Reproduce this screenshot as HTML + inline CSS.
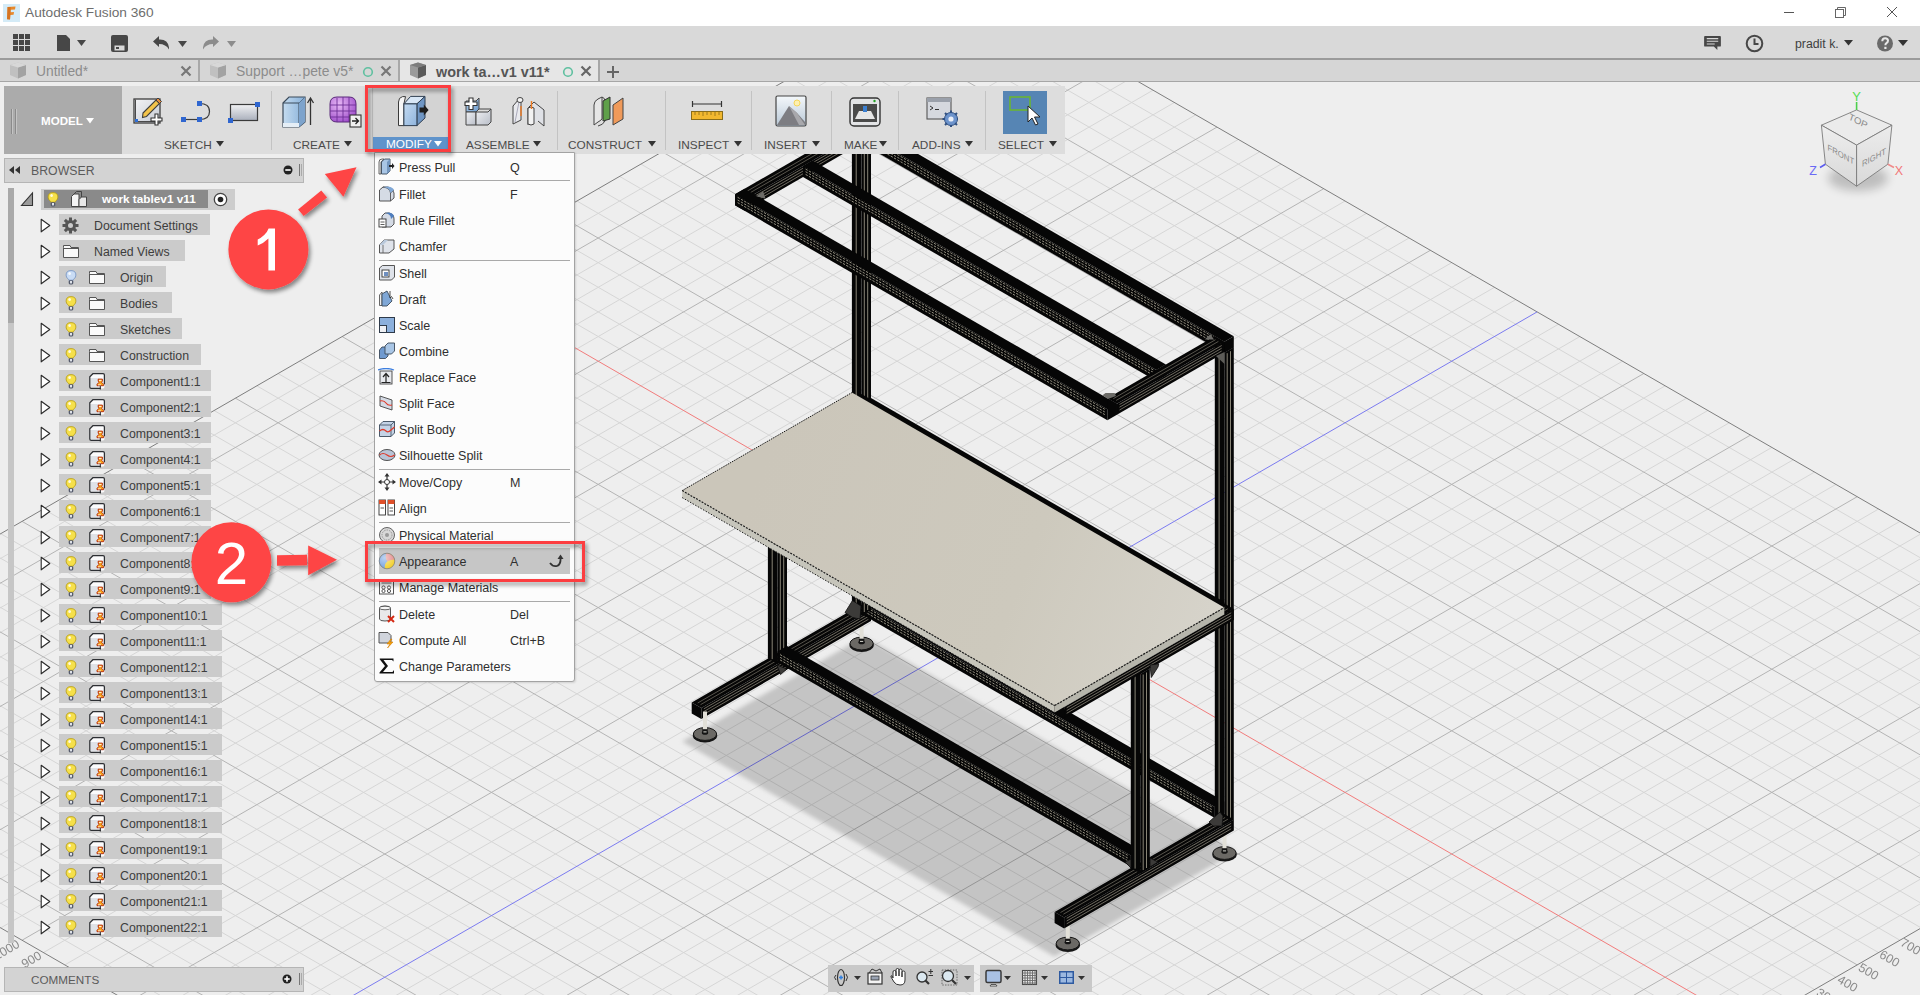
<!DOCTYPE html>
<html><head><meta charset="utf-8">
<style>
*{box-sizing:border-box}
html,body{margin:0;padding:0}
body{width:1920px;height:995px;overflow:hidden;position:relative;background:#eeeeee;font-family:"Liberation Sans",sans-serif;color:#3c3c3c}
.a{position:absolute}
.t{position:absolute;white-space:nowrap;line-height:1}
#title{left:0;top:0;width:1920px;height:26px;background:#fff}
#tool{left:0;top:26px;width:1920px;height:32px;background:#d9d9d9}
#tabs{left:0;top:58px;width:1920px;height:24px;background:#d6d6d6;border-top:2px solid #9b9b9b;border-bottom:1px solid #a6a6a6}
.tab{position:absolute;top:0;height:21px;border-right:2px solid #a8a8a8}
#ribbon{left:4px;top:86px;width:1061px;height:68px;background:#dddddd}
.rl{position:absolute;top:139px;font-size:11.8px;color:#4b4b4b;white-space:nowrap;line-height:12px}
.sep{position:absolute;top:91px;width:1px;height:59px;background:#c3c3c3}
.row{position:absolute;height:21px;background:#cbcbcb}
.rt{position:absolute;font-size:12.3px;color:#3d3d3d;white-space:nowrap;line-height:14px}
.mi{position:absolute;left:399px;font-size:12.5px;color:#2f2f2f;white-space:nowrap;line-height:14px}
.ms{position:absolute;left:510px;font-size:12.5px;color:#2f2f2f;white-space:nowrap;line-height:14px}
.msep{position:absolute;left:379px;width:191px;height:1px;background:#a9a9a9}
</style></head><body>
<!-- ============ VIEWPORT ============ -->
<svg class="a" style="left:0;top:0" width="1920" height="995" viewBox="0 0 1920 995">
<defs><clipPath id="vpclip"><rect x="0" y="82" width="1920" height="913"/></clipPath></defs>
<g clip-path="url(#vpclip)">
<rect x="0" y="82" width="1920" height="913" fill="#eeeeee"/>
<path d="M939.6 -8.4L2241.3 743.1M918.3 3.9L2220.0 755.4M897.0 16.2L2198.6 767.8M854.3 40.9L2156.0 792.4M833.0 53.2L2134.6 804.7M811.6 65.5L2113.3 817.0M790.3 77.8L2091.9 829.4M747.6 102.5L2049.3 854.0M726.3 114.8L2027.9 866.3M704.9 127.1L2006.6 878.6M683.6 139.4L1985.2 891.0M640.9 164.1L1942.6 915.6M619.6 176.4L1921.2 927.9M598.2 188.7L1899.9 940.2M576.9 201.0L1878.6 952.6M534.2 225.7L1835.9 977.2M512.9 238.0L1814.5 989.5M491.5 250.3L1793.2 1001.8M470.2 262.6L1771.9 1014.2M427.5 287.3L1729.2 1038.8M406.2 299.6L1707.8 1051.1M384.8 311.9L1686.5 1063.4M363.5 324.2L1665.2 1075.8M320.8 348.9L1622.5 1100.4M299.5 361.2L1601.1 1112.7M278.1 373.5L1579.8 1125.0M256.8 385.8L1558.5 1137.4M214.1 410.5L1515.8 1162.0M192.8 422.8L1494.5 1174.3M171.4 435.1L1473.1 1186.6M150.1 447.4L1451.8 1199.0M107.4 472.1L1409.1 1223.6M86.1 484.4L1387.8 1235.9M64.8 496.7L1366.4 1248.2M43.4 509.0L1345.1 1260.6M0.7 533.7L1302.4 1285.2M-20.6 546.0L1281.1 1297.5M-41.9 558.3L1259.7 1309.8M-63.3 570.6L1238.4 1322.2M-106.0 595.3L1195.7 1346.8M-127.3 607.6L1174.4 1359.1M-148.6 619.9L1153.0 1371.4M-170.0 632.2L1131.7 1383.8M-212.7 656.9L1089.0 1408.4M-234.0 669.2L1067.7 1420.7M-255.3 681.5L1046.3 1433.0M-276.7 693.8L1025.0 1445.4M-319.3 718.5L982.3 1470.0M-319.3 743.1L982.3 -8.4M-276.7 767.8L1025.0 16.2M-255.3 780.1L1046.3 28.6M-234.0 792.4L1067.7 40.9M-212.7 804.7L1089.0 53.2M-170.0 829.4L1131.7 77.8M-148.6 841.7L1153.0 90.2M-127.3 854.0L1174.4 102.5M-106.0 866.3L1195.7 114.8M-63.3 891.0L1238.4 139.4M-41.9 903.3L1259.7 151.8M-20.6 915.6L1281.1 164.1M0.7 927.9L1302.4 176.4M43.4 952.6L1345.1 201.0M64.8 964.9L1366.4 213.4M86.1 977.2L1387.8 225.7M107.4 989.5L1409.1 238.0M150.1 1014.2L1451.8 262.6M171.4 1026.5L1473.1 275.0M192.8 1038.8L1494.5 287.3M214.1 1051.1L1515.8 299.6M256.8 1075.8L1558.5 324.2M278.1 1088.1L1579.8 336.6M299.5 1100.4L1601.1 348.9M320.8 1112.7L1622.5 361.2M363.5 1137.4L1665.2 385.8M384.8 1149.7L1686.5 398.2M406.2 1162.0L1707.8 410.5M427.5 1174.3L1729.2 422.8M470.2 1199.0L1771.9 447.4M491.5 1211.3L1793.2 459.8M512.9 1223.6L1814.5 472.1M534.2 1235.9L1835.9 484.4M576.9 1260.6L1878.6 509.0M598.2 1272.9L1899.9 521.4M619.6 1285.2L1921.2 533.7M640.9 1297.5L1942.6 546.0M683.6 1322.2L1985.2 570.6M704.9 1334.5L2006.6 583.0M726.3 1346.8L2027.9 595.3M747.6 1359.1L2049.3 607.6M790.3 1383.8L2091.9 632.2M811.6 1396.1L2113.3 644.6M833.0 1408.4L2134.6 656.9M854.3 1420.7L2156.0 669.2M897.0 1445.4L2198.6 693.8M918.3 1457.7L2220.0 706.2M939.6 1470.0L2241.3 718.5" stroke="#d6d6d6" stroke-width="1" fill="none"/>
<path d="M875.6 28.6L2177.3 780.1M768.9 90.2L2070.6 841.7M662.2 151.8L1963.9 903.3M555.5 213.4L1857.2 964.9M342.2 336.6L1643.8 1088.1M235.5 398.2L1537.1 1149.7M128.8 459.8L1430.4 1211.3M22.1 521.4L1323.7 1272.9M-84.6 583.0L1217.0 1334.5M-191.3 644.6L1110.4 1396.1M-298.0 706.2L1003.7 1457.7M-298.0 755.4L1003.7 3.9M-191.3 817.0L1110.4 65.5M-84.6 878.6L1217.0 127.1M22.1 940.2L1323.7 188.7M128.8 1001.8L1430.4 250.3M342.2 1125.0L1643.8 373.5M448.9 1186.6L1750.5 435.1M555.5 1248.2L1857.2 496.7M662.2 1309.8L1963.9 558.3M768.9 1371.4L2070.6 619.9M875.6 1433.0L2177.3 681.5" stroke="#b4b4b4" stroke-width="1" fill="none"/>
<path d="M961.0 -20.7L2262.7 730.8M-340.7 730.8L961.0 1482.3M-340.7 730.8L961.0 -20.7M961.0 1482.3L2262.7 730.8" stroke="#7e7e7e" stroke-width="1" fill="none"/>
<path d="M448.9 275.0L1750.5 1026.5" stroke="#f27c7c" stroke-width="1" fill="none"/>
<path d="M235.5 1063.4L1537.1 311.9" stroke="#7b7bf0" stroke-width="1" fill="none"/>
<text x="1899.5" y="945.0" transform="rotate(30 1899.5 945.0)" font-size="12.5" fill="#8a8a8a" font-family="Liberation Sans, sans-serif">700</text>
<text x="1878.5" y="957.0" transform="rotate(30 1878.5 957.0)" font-size="12.5" fill="#8a8a8a" font-family="Liberation Sans, sans-serif">600</text>
<text x="1857.5" y="970.0" transform="rotate(30 1857.5 970.0)" font-size="12.5" fill="#8a8a8a" font-family="Liberation Sans, sans-serif">500</text>
<text x="1836.5" y="982.0" transform="rotate(30 1836.5 982.0)" font-size="12.5" fill="#8a8a8a" font-family="Liberation Sans, sans-serif">400</text>
<text x="1815.5" y="995.0" transform="rotate(30 1815.5 995.0)" font-size="12.5" fill="#8a8a8a" font-family="Liberation Sans, sans-serif">300</text>
<text x="-3.5" y="960.5" transform="rotate(-30 -3.5 960.5)" font-size="12.5" fill="#8a8a8a" font-family="Liberation Sans, sans-serif">1000</text>
<text x="24.5" y="968.5" transform="rotate(-30 24.5 968.5)" font-size="12.5" fill="#8a8a8a" font-family="Liberation Sans, sans-serif">900</text>
<filter id="blur" x="-20%" y="-20%" width="140%" height="140%"><feGaussianBlur stdDeviation="2.2"/></filter>
<polygon points="682.2,741.6 864.1,636.6 1236.4,851.6 1054.6,956.6" fill="#d2d2d2" filter="url(#blur)" style="mix-blend-mode:multiply"/>
<linearGradient id="ttg" gradientUnits="userSpaceOnUse" x1="760" y1="470" x2="1200" y2="640"><stop offset="0" stop-color="#cbc6ba"/><stop offset=".6" stop-color="#cdc9bd"/><stop offset="1" stop-color="#d6d3ca"/></linearGradient>
<ellipse cx="861.6" cy="645.1" rx="12.2" ry="7" fill="#151515"/><ellipse cx="861.6" cy="643.5" rx="11.6" ry="6.4" fill="#6b6965" stroke="#161616" stroke-width="1"/><rect x="859.6" y="621.0" width="4" height="19.5" fill="#e2e0d8"/><ellipse cx="861.6" cy="642.3" rx="3.2" ry="2" fill="#141414"/><rect x="858.9" y="638.7" width="5.4" height="3.6" fill="#141414"/><rect x="860.0" y="640.9" width="3.2" height="1" fill="#d8d8d0"/><ellipse cx="1224.5" cy="854.6" rx="12.2" ry="7" fill="#151515"/><ellipse cx="1224.5" cy="853.0" rx="11.6" ry="6.4" fill="#6b6965" stroke="#161616" stroke-width="1"/><rect x="1222.5" y="830.5" width="4" height="19.5" fill="#e2e0d8"/><ellipse cx="1224.5" cy="851.8" rx="3.2" ry="2" fill="#141414"/><rect x="1221.8" y="848.2" width="5.4" height="3.6" fill="#141414"/><rect x="1222.9" y="850.4" width="3.2" height="1" fill="#d8d8d0"/><polygon points="861.5,604.6 871.0,610.1 701.3,708.1 691.7,702.6" fill="#060606" /><polygon points="691.7,713.6 701.3,719.1 701.3,708.1 691.7,702.6" fill="#060606" /><polygon points="871.0,621.1 701.3,719.1 701.3,708.1 871.0,610.1" fill="#060606" /><line x1="868.4" y1="619.3" x2="703.9" y2="714.3" stroke="#c2bca8" stroke-width="0.55"/><line x1="868.4" y1="616.5" x2="703.9" y2="711.5" stroke="#c2bca8" stroke-width="0.55"/><line x1="868.4" y1="613.8" x2="703.9" y2="708.8" stroke="#c2bca8" stroke-width="0.55"/><line x1="862.2" y1="608.0" x2="697.7" y2="703.0" stroke="#a8a292" stroke-width="0.5"/><line x1="865.1" y1="609.7" x2="700.5" y2="704.7" stroke="#a8a292" stroke-width="0.5"/><polygon points="871.0,597.6 1224.3,801.6 1214.8,807.1 861.5,603.1" fill="#060606" /><polygon points="861.5,614.1 1214.8,818.1 1214.8,807.1 861.5,603.1" fill="#060606" /><polygon points="1224.3,812.6 1214.8,818.1 1214.8,807.1 1224.3,801.6" fill="#060606" /><line x1="864.1" y1="611.4" x2="1212.2" y2="812.4" stroke="#c2bca8" stroke-width="0.75" stroke-dasharray="2.4 1.4"/><line x1="864.1" y1="608.8" x2="1212.2" y2="809.8" stroke="#c2bca8" stroke-width="0.75" stroke-dasharray="2.4 1.4"/><line x1="864.1" y1="606.1" x2="1212.2" y2="807.1" stroke="#c2bca8" stroke-width="0.75" stroke-dasharray="2.4 1.4"/><polygon points="861.5,121.3 871.0,126.8 861.5,132.3 851.9,126.8" fill="#060606" /><polygon points="851.9,610.1 861.5,615.6 861.5,132.3 851.9,126.8" fill="#060606" /><polygon points="871.0,610.1 861.5,615.6 861.5,132.3 871.0,126.8" fill="#060606" /><line x1="856.2" y1="610.6" x2="856.2" y2="131.3" stroke="#c2bca8" stroke-width="0.7"/><line x1="864.3" y1="612.0" x2="864.3" y2="132.7" stroke="#c2bca8" stroke-width="0.7"/><line x1="867.7" y1="610.0" x2="867.7" y2="130.7" stroke="#c2bca8" stroke-width="0.7"/><polygon points="777.5,453.6 787.0,459.1 777.5,464.6 767.9,459.1" fill="#060606" /><polygon points="767.9,658.6 777.5,664.1 777.5,464.6 767.9,459.1" fill="#060606" /><polygon points="787.0,658.6 777.5,664.1 777.5,464.6 787.0,459.1" fill="#060606" /><line x1="772.2" y1="659.1" x2="772.2" y2="463.6" stroke="#c2bca8" stroke-width="0.7"/><line x1="780.3" y1="660.5" x2="780.3" y2="465.0" stroke="#c2bca8" stroke-width="0.7"/><line x1="783.7" y1="658.5" x2="783.7" y2="463.0" stroke="#c2bca8" stroke-width="0.7"/><polygon points="787.0,646.1 1140.3,850.1 1130.8,855.6 777.5,651.6" fill="#060606" /><polygon points="777.5,662.6 1130.8,866.6 1130.8,855.6 777.5,651.6" fill="#060606" /><polygon points="1140.3,861.1 1130.8,866.6 1130.8,855.6 1140.3,850.1" fill="#060606" /><line x1="780.1" y1="659.9" x2="1128.2" y2="860.9" stroke="#c2bca8" stroke-width="0.75" stroke-dasharray="2.4 1.4"/><line x1="780.1" y1="657.3" x2="1128.2" y2="858.3" stroke="#c2bca8" stroke-width="0.75" stroke-dasharray="2.4 1.4"/><line x1="780.1" y1="654.6" x2="1128.2" y2="855.6" stroke="#c2bca8" stroke-width="0.75" stroke-dasharray="2.4 1.4"/><polygon points="1224.3,341.8 1233.8,347.3 1224.3,352.8 1214.8,347.3" fill="#060606" /><polygon points="1214.8,819.6 1224.3,825.1 1224.3,352.8 1214.8,347.3" fill="#060606" /><polygon points="1233.8,819.6 1224.3,825.1 1224.3,352.8 1233.8,347.3" fill="#060606" /><line x1="1219.1" y1="820.1" x2="1219.1" y2="351.8" stroke="#c2bca8" stroke-width="0.7"/><line x1="1227.2" y1="821.5" x2="1227.2" y2="353.2" stroke="#c2bca8" stroke-width="0.7"/><line x1="1230.5" y1="819.5" x2="1230.5" y2="351.2" stroke="#c2bca8" stroke-width="0.7"/><ellipse cx="705.0" cy="735.6" rx="12.2" ry="7" fill="#151515"/><ellipse cx="705.0" cy="734.0" rx="11.6" ry="6.4" fill="#6b6965" stroke="#161616" stroke-width="1"/><rect x="703.0" y="711.5" width="4" height="19.5" fill="#e2e0d8"/><ellipse cx="705.0" cy="732.8" rx="3.2" ry="2" fill="#141414"/><rect x="702.3" y="729.2" width="5.4" height="3.6" fill="#141414"/><rect x="703.4" y="731.4" width="3.2" height="1" fill="#d8d8d0"/><ellipse cx="1067.8" cy="945.1" rx="12.2" ry="7" fill="#151515"/><ellipse cx="1067.8" cy="943.5" rx="11.6" ry="6.4" fill="#6b6965" stroke="#161616" stroke-width="1"/><rect x="1065.8" y="921.0" width="4" height="19.5" fill="#e2e0d8"/><ellipse cx="1067.8" cy="942.2" rx="3.2" ry="2" fill="#141414"/><rect x="1065.1" y="938.7" width="5.4" height="3.6" fill="#141414"/><rect x="1066.2" y="940.9" width="3.2" height="1" fill="#d8d8d0"/><polygon points="1224.3,814.1 1233.8,819.6 1064.1,917.6 1054.6,912.1" fill="#060606" /><polygon points="1054.6,923.1 1064.1,928.6 1064.1,917.6 1054.6,912.1" fill="#060606" /><polygon points="1233.8,830.6 1064.1,928.6 1064.1,917.6 1233.8,819.6" fill="#060606" /><line x1="1231.2" y1="828.8" x2="1066.7" y2="923.8" stroke="#c2bca8" stroke-width="0.55"/><line x1="1231.2" y1="826.0" x2="1066.7" y2="921.0" stroke="#c2bca8" stroke-width="0.55"/><line x1="1231.2" y1="823.3" x2="1066.7" y2="918.3" stroke="#c2bca8" stroke-width="0.55"/><line x1="1225.1" y1="817.5" x2="1060.5" y2="912.5" stroke="#a8a292" stroke-width="0.5"/><line x1="1227.9" y1="819.2" x2="1063.4" y2="914.2" stroke="#a8a292" stroke-width="0.5"/><polygon points="1140.3,663.1 1149.8,668.6 1140.3,674.1 1130.8,668.6" fill="#060606" /><polygon points="1130.8,868.1 1140.3,873.6 1140.3,674.1 1130.8,668.6" fill="#060606" /><polygon points="1149.8,868.1 1140.3,873.6 1140.3,674.1 1149.8,668.6" fill="#060606" /><line x1="1135.1" y1="868.6" x2="1135.1" y2="673.1" stroke="#c2bca8" stroke-width="0.7"/><line x1="1143.2" y1="870.0" x2="1143.2" y2="674.5" stroke="#c2bca8" stroke-width="0.7"/><line x1="1146.5" y1="868.0" x2="1146.5" y2="672.5" stroke="#c2bca8" stroke-width="0.7"/><polygon points="861.5,394.1 871.0,399.6 709.0,493.1 699.5,487.6" fill="#060606" /><polygon points="699.5,498.6 709.0,504.1 709.0,493.1 699.5,487.6" fill="#060606" /><polygon points="871.0,410.6 709.0,504.1 709.0,493.1 871.0,399.6" fill="#060606" /><polygon points="871.0,399.6 1224.3,603.6 1214.8,609.1 861.5,405.1" fill="#060606" /><polygon points="861.5,416.1 1214.8,620.1 1214.8,609.1 861.5,405.1" fill="#060606" /><polygon points="1224.3,614.6 1214.8,620.1 1214.8,609.1 1224.3,603.6" fill="#060606" /><polygon points="1224.3,603.6 1233.8,609.1 1064.1,707.1 1054.6,701.6" fill="#060606" /><polygon points="1054.6,712.6 1064.1,718.1 1064.1,707.1 1054.6,701.6" fill="#060606" /><polygon points="1233.8,620.1 1064.1,718.1 1064.1,707.1 1233.8,609.1" fill="#060606" /><line x1="1231.2" y1="618.3" x2="1066.7" y2="713.3" stroke="#c2bca8" stroke-width="0.55"/><line x1="1231.2" y1="615.6" x2="1066.7" y2="710.6" stroke="#c2bca8" stroke-width="0.55"/><line x1="1231.2" y1="612.8" x2="1066.7" y2="707.8" stroke="#c2bca8" stroke-width="0.55"/><line x1="1225.1" y1="607.0" x2="1060.5" y2="702.0" stroke="#a8a292" stroke-width="0.5"/><line x1="1227.9" y1="608.7" x2="1063.4" y2="703.7" stroke="#a8a292" stroke-width="0.5"/><polygon points="871.0,398.1 1224.3,602.1 1214.8,607.6 861.5,403.6" fill="#060606" /><polygon points="861.5,414.6 1214.8,618.6 1214.8,607.6 861.5,403.6" fill="#060606" /><polygon points="1224.3,613.1 1214.8,618.6 1214.8,607.6 1224.3,602.1" fill="#060606" /><line x1="864.1" y1="411.9" x2="1212.2" y2="612.9" stroke="#c2bca8" stroke-width="0.75" stroke-dasharray="2.4 1.4"/><line x1="864.1" y1="409.3" x2="1212.2" y2="610.3" stroke="#c2bca8" stroke-width="0.75" stroke-dasharray="2.4 1.4"/><line x1="864.1" y1="406.6" x2="1212.2" y2="607.6" stroke="#c2bca8" stroke-width="0.75" stroke-dasharray="2.4 1.4"/><polygon points="851.9,392.6 1224.3,607.6 1054.6,705.6 682.2,490.6" fill="url(#ttg)" /><polygon points="682.2,497.6 1054.6,712.6 1054.6,705.6 682.2,490.6" fill="#c6c5bb" /><polygon points="1224.3,614.6 1054.6,712.6 1054.6,705.6 1224.3,607.6" fill="#b7b6ac" /><line x1="682.2" y1="490.6" x2="1054.6" y2="705.6" stroke="#1a1a1a" stroke-width="1.2" stroke-dasharray="2 1.2"/><line x1="682.2" y1="497.6" x2="1054.6" y2="712.6" stroke="#1a1a1a" stroke-width="1" stroke-dasharray="1.5 1.5"/><line x1="1054.6" y1="705.6" x2="1224.3" y2="607.6" stroke="#1a1a1a" stroke-width="1.2" stroke-dasharray="2 1.2"/><line x1="682.2" y1="490.6" x2="851.9" y2="392.6" stroke="#1a1a1a" stroke-width="1" stroke-dasharray="1.5 1"/><polygon points="861.5,121.3 1233.8,336.3 1224.3,341.8 851.9,126.8" fill="#060606" /><polygon points="851.9,137.8 1224.3,352.8 1224.3,341.8 851.9,126.8" fill="#060606" /><polygon points="1233.8,347.3 1224.3,352.8 1224.3,341.8 1233.8,336.3" fill="#060606" /><line x1="854.5" y1="135.1" x2="1221.7" y2="347.1" stroke="#c2bca8" stroke-width="0.75" stroke-dasharray="2.4 1.4"/><line x1="854.5" y1="132.5" x2="1221.7" y2="344.5" stroke="#c2bca8" stroke-width="0.75" stroke-dasharray="2.4 1.4"/><line x1="854.5" y1="129.8" x2="1221.7" y2="341.8" stroke="#c2bca8" stroke-width="0.75" stroke-dasharray="2.4 1.4"/><polygon points="851.9,126.8 861.5,132.3 744.6,199.8 735.0,194.3" fill="#060606" /><polygon points="735.0,205.3 744.6,210.8 744.6,199.8 735.0,194.3" fill="#060606" /><polygon points="861.5,143.3 744.6,210.8 744.6,199.8 861.5,132.3" fill="#060606" /><line x1="858.9" y1="141.5" x2="747.2" y2="206.0" stroke="#c2bca8" stroke-width="0.55"/><line x1="858.9" y1="138.8" x2="747.2" y2="203.2" stroke="#c2bca8" stroke-width="0.55"/><line x1="858.9" y1="136.0" x2="747.2" y2="200.5" stroke="#c2bca8" stroke-width="0.55"/><line x1="852.7" y1="130.2" x2="741.0" y2="194.7" stroke="#a8a292" stroke-width="0.5"/><line x1="855.5" y1="131.9" x2="743.8" y2="196.4" stroke="#a8a292" stroke-width="0.5"/><polygon points="812.5,160.6 1165.9,364.6 1156.3,370.1 803.0,166.1" fill="#060606" /><polygon points="803.0,177.1 1156.3,381.1 1156.3,370.1 803.0,166.1" fill="#060606" /><polygon points="1165.9,375.6 1156.3,381.1 1156.3,370.1 1165.9,364.6" fill="#060606" /><line x1="805.6" y1="174.4" x2="1153.7" y2="375.4" stroke="#c2bca8" stroke-width="0.75" stroke-dasharray="2.4 1.4"/><line x1="805.6" y1="171.7" x2="1153.7" y2="372.7" stroke="#c2bca8" stroke-width="0.75" stroke-dasharray="2.4 1.4"/><line x1="805.6" y1="169.1" x2="1153.7" y2="370.1" stroke="#c2bca8" stroke-width="0.75" stroke-dasharray="2.4 1.4"/><polygon points="744.6,188.8 1116.9,403.8 1107.4,409.3 735.0,194.3" fill="#060606" /><polygon points="735.0,205.3 1107.4,420.3 1107.4,409.3 735.0,194.3" fill="#060606" /><polygon points="1116.9,414.8 1107.4,420.3 1107.4,409.3 1116.9,403.8" fill="#060606" /><line x1="737.6" y1="202.6" x2="1104.8" y2="414.6" stroke="#c2bca8" stroke-width="0.75" stroke-dasharray="2.4 1.4"/><line x1="737.6" y1="200.0" x2="1104.8" y2="412.0" stroke="#c2bca8" stroke-width="0.75" stroke-dasharray="2.4 1.4"/><line x1="737.6" y1="197.3" x2="1104.8" y2="409.3" stroke="#c2bca8" stroke-width="0.75" stroke-dasharray="2.4 1.4"/><polygon points="1214.8,336.3 1224.3,341.8 1116.9,403.8 1107.4,398.3" fill="#060606" /><polygon points="1107.4,409.3 1116.9,414.8 1116.9,403.8 1107.4,398.3" fill="#060606" /><polygon points="1224.3,352.8 1116.9,414.8 1116.9,403.8 1224.3,341.8" fill="#060606" /><line x1="1221.7" y1="351.0" x2="1119.5" y2="410.0" stroke="#c2bca8" stroke-width="0.55"/><line x1="1221.7" y1="348.2" x2="1119.5" y2="407.2" stroke="#c2bca8" stroke-width="0.55"/><line x1="1221.7" y1="345.5" x2="1119.5" y2="404.5" stroke="#c2bca8" stroke-width="0.55"/><line x1="1215.5" y1="339.7" x2="1113.3" y2="398.7" stroke="#a8a292" stroke-width="0.5"/><line x1="1218.4" y1="341.4" x2="1116.2" y2="400.4" stroke="#a8a292" stroke-width="0.5"/><polygon points="756.3,196.3 763.1,191.3 765.6,198.8" fill="#6d6c68"/><polygon points="1205,339.5 1210.3,334.3 1214,339.5" fill="#6d6c68"/><polygon points="1216,356 1224.5,352 1224.5,364" fill="#5d5c58"/><polygon points="1102.5,395.3 1105.5,393 1114.6,393 1116,396 1107.8,399" fill="#6d6c68"/><polygon points="845,612.5 852.5,600.5 861,606 860,619 852.5,617.5" fill="#3c3b39" stroke="#0c0c0c" stroke-width=".8"/><polygon points="777,665 787,669 780.5,674.5" fill="#3c3b39" stroke="#0c0c0c" stroke-width=".8"/><polygon points="1209,822 1220,812 1223,816 1222,826 1213,826" fill="#3c3b39" stroke="#0c0c0c" stroke-width=".8"/><polygon points="1150,665 1158.8,663.8 1158,667 1151.3,677.5" fill="#3c3b39" stroke="#0c0c0c" stroke-width=".8"/><polygon points="1125,862 1131,859 1131,868" fill="#3c3b39" stroke="#0c0c0c" stroke-width=".8"/><polygon points="1150,858 1158,862 1150,867" fill="#3c3b39" stroke="#0c0c0c" stroke-width=".8"/>
</g>
</svg>

<!-- ============ TITLE BAR ============ -->
<div id="title" class="a">
  <svg class="a" style="left:3px;top:4px" width="17" height="18" viewBox="0 0 17 18">
    <rect x="0" y="0" width="17" height="18" fill="#d4ebf7"/>
    <path d="M4.5 3 L12.5 2.5 L12 5.5 L7.8 5.8 L7.6 8.2 L11 8 L10.6 10.8 L7.4 11 L7 15.5 L4 15.2 Z" fill="#e8892b"/>
    <path d="M4.5 3 L7.8 3 L7 15.5 L4 15.2 Z" fill="#c9661a" opacity=".6"/>
  </svg>
  <div class="t" style="left:25px;top:6px;font-size:13.7px;color:#6e6e6e">Autodesk Fusion 360</div>
  <div class="a" style="left:1784px;top:12px;width:10px;height:1px;background:#555"></div>
  <svg class="a" style="left:1834px;top:6px" width="13" height="13" viewBox="0 0 13 13"><rect x="1.5" y="3.5" width="8" height="8" fill="none" stroke="#666"/><path d="M3.5 3.5V1.5H11.5V9.5H9.5" fill="none" stroke="#666"/></svg>
  <svg class="a" style="left:1886px;top:6px" width="12" height="12" viewBox="0 0 12 12"><path d="M1 1L11 11M11 1L1 11" stroke="#555" stroke-width="1"/></svg>
</div>

<!-- ============ TOOLBAR ============ -->
<div id="tool" class="a">
  <svg class="a" style="left:13px;top:8px" width="17" height="17" viewBox="0 0 17 17" fill="#464646">
    <rect x="0" y="0" width="5" height="5"/><rect x="6" y="0" width="5" height="5"/><rect x="12" y="0" width="5" height="5"/>
    <rect x="0" y="6" width="5" height="5"/><rect x="6" y="6" width="5" height="5"/><rect x="12" y="6" width="5" height="5"/>
    <rect x="0" y="12" width="5" height="5"/><rect x="6" y="12" width="5" height="5"/><rect x="12" y="12" width="5" height="5"/>
  </svg>
  <svg class="a" style="left:57px;top:9px" width="30" height="17" viewBox="0 0 30 17" fill="#474747">
    <path d="M0 0H9L13 4V16H0Z"/><path d="M20 5H29L24.5 11Z"/>
  </svg>
  <svg class="a" style="left:111px;top:9px" width="17" height="17" viewBox="0 0 17 17">
    <path d="M0 2Q0 0 2 0H15Q17 0 17 2V15Q17 17 15 17H2Q0 17 0 15Z" fill="#474747"/>
    <rect x="3.5" y="10.5" width="10" height="5" fill="#d9d9d9"/><rect x="5" y="12" width="3" height="2" fill="#474747"/>
  </svg>
  <svg class="a" style="left:153px;top:10px" width="36" height="15" viewBox="0 0 36 15" fill="#474747">
    <path d="M0 5.5L6 0V3.5Q15 3 16 11.5L16 13.5Q13 8 6 8V11Z"/><path d="M25 5H34L29.5 11Z"/>
  </svg>
  <svg class="a" style="left:202px;top:10px" width="36" height="15" viewBox="0 0 36 15" fill="#8c8c8c">
    <path d="M17 5.5L11 0V3.5Q2 3 1 11.5L1 13.5Q4 8 11 8V11Z"/><path d="M25 5H34L29.5 11Z"/>
  </svg>
  <!-- right side -->
  <svg class="a" style="left:1703.5px;top:10px" width="17" height="15" viewBox="0 0 19 17">
    <path d="M0 1Q0 0 1 0H18Q19 0 19 1V11Q19 12 18 12H15V16L11 12H1Q0 12 0 11Z" fill="#474747"/>
    <path d="M3 3H16M3 6H16M3 9H12" stroke="#d9d9d9" stroke-width="1.2"/>
  </svg>
  <svg class="a" style="left:1745px;top:8px" width="19" height="19" viewBox="0 0 19 19">
    <circle cx="9.5" cy="9.5" r="7.8" fill="none" stroke="#474747" stroke-width="2"/><path d="M9.5 4.5V10H13.5" fill="none" stroke="#474747" stroke-width="2"/>
  </svg>
  <div class="t" style="left:1795px;top:12px;font-size:12.3px;color:#3f3f3f">pradit k.</div>
  <svg class="a" style="left:1844px;top:13px" width="10" height="8" viewBox="0 0 10 8"><path d="M0 1H9L4.5 6.5Z" fill="#333"/></svg>
  <svg class="a" style="left:1876px;top:8px" width="34" height="19" viewBox="0 0 34 19">
    <circle cx="9" cy="9.5" r="8" fill="#6a6a6a"/>
    <path d="M6.3 7.2Q6.3 4.2 9.2 4.2Q12 4.2 12 6.8Q12 8.3 10.2 9.3Q9.4 9.8 9.4 11.3" fill="none" stroke="#e8e8e8" stroke-width="2"/>
    <rect x="8.3" y="12.8" width="2.2" height="2.2" fill="#e8e8e8"/>
    <path d="M22 6H32L27 12Z" fill="#333"/>
  </svg>
</div>

<!-- ============ TABS ============ -->
<div id="tabs" class="a">
  <div class="tab" style="left:0;width:200px;background:#d6d6d6"></div>
  <div class="tab" style="left:200px;width:200px;background:#d6d6d6"></div>
  <div class="tab" style="left:400px;width:200px;background:#e6e6e6"></div>
  <svg class="a" style="left:9px;top:2px" width="18" height="17" viewBox="0 0 18 17"><path d="M1 3L9 0.5L17 3V13L9 16.5L1 13Z" fill="#c0c0c0"/><path d="M9 5.5L17 3V13L9 16.5Z" fill="#a3a3a3"/><path d="M1 3L9 5.5L17 3L9 0.5Z" fill="#d8d8d8"/></svg>
  <div class="t" style="left:36px;top:5px;font-size:13.8px;color:#8c8c8c">Untitled*</div>
  <svg class="a" style="left:180px;top:5px" width="12" height="12" viewBox="0 0 12 12"><path d="M1.5 1.5L10.5 10.5M10.5 1.5L1.5 10.5" stroke="#777" stroke-width="2.2"/></svg>
  <svg class="a" style="left:209px;top:2px" width="18" height="17" viewBox="0 0 18 17"><path d="M1 3L9 0.5L17 3V13L9 16.5L1 13Z" fill="#c0c0c0"/><path d="M9 5.5L17 3V13L9 16.5Z" fill="#a3a3a3"/><path d="M1 3L9 5.5L17 3L9 0.5Z" fill="#d8d8d8"/></svg>
  <div class="t" style="left:236px;top:5px;font-size:13.9px;color:#8c8c8c">Support …pete v5*</div>
  <svg class="a" style="left:362px;top:6px" width="12" height="12" viewBox="0 0 12 12"><circle cx="6" cy="6" r="4.3" fill="none" stroke="#5fc0a0" stroke-width="1.6"/></svg>
  <svg class="a" style="left:380px;top:5px" width="12" height="12" viewBox="0 0 12 12"><path d="M1.5 1.5L10.5 10.5M10.5 1.5L1.5 10.5" stroke="#777" stroke-width="2.2"/></svg>
  <svg class="a" style="left:409px;top:2px" width="18" height="17" viewBox="0 0 18 17"><path d="M1 3L9 0.5L17 3V13L9 16.5L1 13Z" fill="#9a9a9a"/><path d="M9 5.5L17 3V13L9 16.5Z" fill="#5a5a5a"/><path d="M1 3L9 5.5L17 3L9 0.5Z" fill="#7c7c7c"/></svg>
  <div class="t" style="left:436px;top:5px;font-size:14.4px;font-weight:bold;color:#555">work ta…v1 v11*</div>
  <svg class="a" style="left:562px;top:6px" width="12" height="12" viewBox="0 0 12 12"><circle cx="6" cy="6" r="4.3" fill="none" stroke="#5fc0a0" stroke-width="1.6"/></svg>
  <svg class="a" style="left:580px;top:5px" width="12" height="12" viewBox="0 0 12 12"><path d="M1.5 1.5L10.5 10.5M10.5 1.5L1.5 10.5" stroke="#666" stroke-width="2.2"/></svg>
  <svg class="a" style="left:606px;top:5px" width="14" height="14" viewBox="0 0 14 14"><path d="M7 1V13M1 7H13" stroke="#666" stroke-width="2"/></svg>
</div>
<!-- ============ RIBBON ============ -->
<div id="ribbon" class="a"></div>
<div class="a" style="left:4px;top:86px;width:118px;height:68px;background:#ababab"></div>
<div class="a" style="left:11px;top:109px;width:1px;height:25px;background:#8b8b8b"></div>
<div class="a" style="left:12px;top:109px;width:1px;height:25px;background:#c4c4c4"></div>
<div class="a" style="left:15px;top:109px;width:1px;height:25px;background:#8b8b8b"></div>
<div class="a" style="left:16px;top:109px;width:1px;height:25px;background:#c4c4c4"></div>
<div class="t" style="left:41px;top:115px;font-size:11.6px;font-weight:bold;color:#fff">MODEL</div>
<svg class="a" style="left:86px;top:118px" width="8" height="6" viewBox="0 0 8 6"><path d="M0 0H8L4 5.5Z" fill="#fff"/></svg>

<!-- sketch icons -->
<svg class="a" style="left:133px;top:97px" width="31" height="31" viewBox="0 0 31 31">
  <defs><linearGradient id="gsk" x1="0" y1="0" x2="1" y2="1"><stop offset="0" stop-color="#f4f4f6"/><stop offset="1" stop-color="#c5cad3"/></linearGradient></defs>
  <rect x="1" y="2" width="26" height="24" fill="url(#gsk)" stroke="#3e3e3e" stroke-width="1.3"/>
  <path d="M2.5 2.5V24.5H25" fill="none" stroke="#4a4a4a" stroke-width="1"/>
  <rect x="2" y="22" width="3" height="3" fill="#2f6fd6"/>
  <path d="M10 16L23 3L26.5 6.5L13.5 19.5L9.5 20.5Z" fill="#f3c34a" stroke="#3e3e3e" stroke-width="1.1"/>
  <path d="M23 3L25 1L28.5 4.5L26.5 6.5Z" fill="#e58a3a" stroke="#3e3e3e" stroke-width="1"/>
  <path d="M18 21H22V17H25V21H29V24H25V28H22V24H18Z" fill="#fff" stroke="#333" stroke-width="1.1"/>
</svg>
<svg class="a" style="left:180px;top:100px" width="33" height="23" viewBox="0 0 33 23">
  <path d="M3.5 19.5H19.5" stroke="#3c3c3c" stroke-width="1.2"/>
  <path d="M19.5 3.5Q29.5 3.5 29.5 11.5Q29.5 19.5 19.5 19.5" fill="none" stroke="#3c3c3c" stroke-width="1.2"/>
  <rect x="1" y="17" width="5" height="5" fill="#2f66d0"/><rect x="17" y="17" width="5" height="5" fill="#2f66d0"/><rect x="17" y="1" width="5" height="5" fill="#2f66d0"/>
</svg>
<svg class="a" style="left:228px;top:101px" width="33" height="22" viewBox="0 0 33 22">
  <defs><linearGradient id="grc" x1="0" y1="0" x2="0" y2="1"><stop offset="0" stop-color="#f2f2f4"/><stop offset="1" stop-color="#a9afbb"/></linearGradient></defs>
  <rect x="2.5" y="3.5" width="27" height="16" fill="url(#grc)" stroke="#3a3a3a" stroke-width="1.2"/>
  <rect x="0" y="17" width="5" height="5" fill="#2f66d0"/><rect x="27" y="1" width="5" height="5" fill="#2f66d0"/>
</svg>
<div class="rl" style="left:164px">SKETCH</div>
<svg class="a" style="left:216px;top:141px" width="8" height="6" viewBox="0 0 8 6"><path d="M0 0H8L4 5.5Z" fill="#333"/></svg>
<div class="sep" style="left:271px"></div>

<!-- create icons -->
<svg class="a" style="left:282px;top:95px" width="33" height="34" viewBox="0 0 33 34">
  <defs><linearGradient id="gex" x1="0" y1="0" x2="1" y2="0"><stop offset="0" stop-color="#c5dcf0"/><stop offset="1" stop-color="#86afd8"/></linearGradient></defs>
  <path d="M1 8L7 2H23V27L17 32H1Z" fill="url(#gex)" stroke="#3b4a5a" stroke-width="1.2"/>
  <path d="M1 8H17V32M17 8L23 2" fill="none" stroke="#3b4a5a" stroke-width="1"/>
  <path d="M17 8L23 2V27L17 32Z" fill="#7da3cc"/>
  <path d="M1 28H17V32H1Z" fill="#e5eef6"/>
  <path d="M28.5 30V4M25.5 8L28.5 3L31.5 8" fill="none" stroke="#333" stroke-width="1.3"/>
</svg>
<svg class="a" style="left:327px;top:95px" width="36" height="34" viewBox="0 0 36 34">
  <defs><radialGradient id="gfm" cx=".35" cy=".3" r=".8"><stop offset="0" stop-color="#e7b8f5"/><stop offset="1" stop-color="#9b48c8"/></radialGradient></defs>
  <path d="M3 9Q3 2 10 2H22Q29 2 29 9V20Q29 27 22 27H10Q3 27 3 20Z" fill="url(#gfm)" stroke="#5a2a7a" stroke-width="1"/>
  <path d="M3 10H29M3 16H29M3 22H28M10 3V27M16 2V27M22 2V27" stroke="#6d2f96" stroke-width=".9" fill="none"/>
  <rect x="23" y="20" width="11" height="12" fill="#f0f0f0" stroke="#333" stroke-width="1.1"/>
  <path d="M25 26H31M28.5 23L31.5 26L28.5 29" fill="none" stroke="#222" stroke-width="1.3"/>
</svg>
<div class="rl" style="left:293px">CREATE</div>
<svg class="a" style="left:344px;top:141px" width="8" height="6" viewBox="0 0 8 6"><path d="M0 0H8L4 5.5Z" fill="#333"/></svg>

<!-- modify (active) -->
<div class="a" style="left:372px;top:88px;width:78px;height:49px;background:#d3d3d3"></div>
<div class="a" style="left:373px;top:137px;width:78px;height:13px;background:#5f93cb"></div>
<div class="a" style="left:372px;top:88px;width:1px;height:62px;background:#bdbdbd"></div>
<svg class="a" style="left:397px;top:95px" width="34" height="33" viewBox="0 0 34 33">
  <defs><linearGradient id="gpp" x1="0" y1="0" x2="1" y2="1"><stop offset="0" stop-color="#c3daf1"/><stop offset="1" stop-color="#8fb4dd"/></linearGradient></defs>
  <path d="M1.5 7Q1.5 2.5 5.5 1.6H8.5L6.9 8.9V30.6H1.5Z" fill="#f6f6f6" stroke="#3a3a3a" stroke-width="1"/>
  <path d="M6.9 8.9L13.6 1.4H28L19.9 8.9Z" fill="#d8e7f6" stroke="#2f3f52" stroke-width="1"/>
  <path d="M19.9 8.9L28 1.4V23L19.9 30.6Z" fill="#6f96c4" stroke="#2f3f52" stroke-width="1"/>
  <rect x="6.9" y="8.9" width="13" height="21.7" fill="url(#gpp)" stroke="#2f3f52" stroke-width="1"/>
  <path d="M22.5 12.6H26.8V9.6L31.6 15L26.8 20.4V17.4H22.5Z" fill="#1e1e1e"/>
</svg>
<div class="t" style="left:386px;top:139px;font-size:11.8px;color:#fff">MODIFY</div>
<svg class="a" style="left:434px;top:141px" width="8" height="6" viewBox="0 0 8 6"><path d="M0 0H8L4 5.5Z" fill="#fff"/></svg>

<!-- assemble -->
<svg class="a" style="left:463px;top:95px" width="36" height="34" viewBox="0 0 36 34">
  <defs><linearGradient id="gas" x1="0" y1="0" x2="1" y2="1"><stop offset="0" stop-color="#b7d2ee"/><stop offset="1" stop-color="#6f9ccc"/></linearGradient>
  <linearGradient id="gas2" x1="0" y1="0" x2="1" y2="1"><stop offset="0" stop-color="#f0f1f4"/><stop offset="1" stop-color="#b9bec8"/></linearGradient></defs>
  <path d="M3 6H13L16 3V14L13 17H3Z" fill="url(#gas)" stroke="#444" stroke-width="1"/>
  <path d="M3 17H13V30H3Z" fill="url(#gas2)" stroke="#444" stroke-width="1"/>
  <path d="M13 17H25L28 14V27L25 30H13Z" fill="url(#gas2)" stroke="#444" stroke-width="1"/>
  <path d="M13 17L16 14H28" fill="none" stroke="#444" stroke-width="1"/>
  <path d="M2 7H6V3H10V7H14V10.5H10V14.5H6V10.5H2Z" fill="#fff" stroke="#333" stroke-width="1.1"/>
</svg>
<svg class="a" style="left:510px;top:96px" width="38" height="33" viewBox="0 0 38 33">
  <path d="M3 28V10L9 3L11 6V24Z" fill="#e9eaee" stroke="#444" stroke-width="1"/>
  <path d="M5 26L9 6" stroke="#aab" stroke-width="1"/>
  <ellipse cx="10" cy="4" rx="3" ry="2.5" fill="#f5f5f5" stroke="#444" stroke-width="1"/>
  <path d="M11 10V20" stroke="#f07a20" stroke-width="1.4"/>
  <path d="M18 29V12L24 6L34 14V30L28 25" fill="#dfe1e6" stroke="#444" stroke-width="1"/>
  <path d="M18 12Q21 10 24 12V28Q21 30 18 28Z" fill="#f2f2f2" stroke="#444" stroke-width="1"/>
  <path d="M21.5 5V13" stroke="#f07a20" stroke-width="1.4"/>
</svg>
<div class="rl" style="left:466px">ASSEMBLE</div>
<svg class="a" style="left:533px;top:141px" width="8" height="6" viewBox="0 0 8 6"><path d="M0 0H8L4 5.5Z" fill="#333"/></svg>
<div class="sep" style="left:557px"></div>

<!-- construct -->
<svg class="a" style="left:592px;top:95px" width="36" height="34" viewBox="0 0 36 34">
  <path d="M2 30V10Q2 6 6 4L10 2V24Q8 26 6 27Z" fill="#e6e6e6" stroke="#444" stroke-width="1"/>
  <path d="M10 2Q13 3 13 6V26Q11 30 6 31" fill="none" stroke="#444" stroke-width="1"/>
  <path d="M11 26V6L18 2V24Z" fill="#5fa04a" stroke="#333" stroke-width="1"/>
  <path d="M21 30V10L31 3V24Z" fill="#f09a5a" stroke="#444" stroke-width="1"/>
</svg>
<div class="rl" style="left:568px">CONSTRUCT</div>
<svg class="a" style="left:648px;top:141px" width="8" height="6" viewBox="0 0 8 6"><path d="M0 0H8L4 5.5Z" fill="#333"/></svg>
<div class="sep" style="left:665px"></div>

<!-- inspect -->
<svg class="a" style="left:691px;top:100px" width="32" height="22" viewBox="0 0 32 22">
  <path d="M1.5 1V7M30.5 1V7M1.5 4H30.5" stroke="#333" stroke-width="1.2"/>
  <rect x="0.5" y="11.5" width="31" height="8" fill="#f2b82f" stroke="#8a6d1a" stroke-width="1"/>
  <path d="M4 12V15M8 12V15M12 12V16M16 12V15M20 12V15M24 12V16M28 12V15" stroke="#8a6d1a" stroke-width=".8"/>
</svg>
<div class="rl" style="left:678px">INSPECT</div>
<svg class="a" style="left:734px;top:141px" width="8" height="6" viewBox="0 0 8 6"><path d="M0 0H8L4 5.5Z" fill="#333"/></svg>
<div class="sep" style="left:751px"></div>

<!-- insert -->
<svg class="a" style="left:775px;top:95px" width="32" height="33" viewBox="0 0 32 33">
  <defs><linearGradient id="gin" x1="0" y1="0" x2="0" y2="1"><stop offset="0" stop-color="#f4f8fb"/><stop offset="1" stop-color="#b9c8d6"/></linearGradient></defs>
  <rect x="1" y="1" width="30" height="30" rx="1.5" fill="url(#gin)" stroke="#444" stroke-width="1.2"/>
  <path d="M2 30L14 11L22 18L30 27V30Z" fill="#7d7d82"/>
  <path d="M14 11L24 30H30L22 18Z" fill="#a8a8ac"/>
  <circle cx="22" cy="8" r="3" fill="#fdf0b0" stroke="#f6d65a" stroke-width="1"/>
</svg>
<div class="rl" style="left:764px">INSERT</div>
<svg class="a" style="left:812px;top:141px" width="8" height="6" viewBox="0 0 8 6"><path d="M0 0H8L4 5.5Z" fill="#333"/></svg>
<div class="sep" style="left:831px"></div>

<!-- make -->
<svg class="a" style="left:849px;top:97px" width="32" height="30" viewBox="0 0 32 30">
  <rect x="1" y="1" width="30" height="28" rx="4" fill="#e3e4e6" stroke="#333" stroke-width="1.4"/>
  <rect x="4" y="7" width="24" height="18" fill="#4a4a4a"/>
  <path d="M6 22L10 14H22L26 22Z" fill="#e6e6e6"/>
  <rect x="14" y="9" width="4" height="6" fill="#3b7fd0"/>
  <circle cx="25.5" cy="4" r="1.2" fill="#23a023"/>
</svg>
<div class="rl" style="left:844px">MAKE</div>
<svg class="a" style="left:879px;top:141px" width="8" height="6" viewBox="0 0 8 6"><path d="M0 0H8L4 5.5Z" fill="#333"/></svg>
<div class="sep" style="left:898px"></div>

<!-- add-ins -->
<svg class="a" style="left:926px;top:97px" width="32" height="30" viewBox="0 0 32 30">
  <rect x="1" y="1" width="24" height="21" fill="#d5d8de" stroke="#555" stroke-width="1.1"/>
  <rect x="1" y="1" width="24" height="4" fill="#9aa0aa"/>
  <path d="M4 9L7 11L4 13M9 12.5H13" fill="none" stroke="#333" stroke-width="1"/>
  <circle cx="25" cy="22" r="6.5" fill="#6c93cc" stroke="#2f4f80" stroke-width="1"/>
  <circle cx="25" cy="22" r="2.6" fill="#e8eef8"/>
  <path d="M25 13.5V16M25 28V30.5M16.5 22H19M31 22H33.5M19 16L20.8 17.8M29.2 26.2L31 28M31 16L29.2 17.8M20.8 26.2L19 28" stroke="#2f4f80" stroke-width="2"/>
</svg>
<div class="rl" style="left:912px">ADD-INS</div>
<svg class="a" style="left:965px;top:141px" width="8" height="6" viewBox="0 0 8 6"><path d="M0 0H8L4 5.5Z" fill="#333"/></svg>
<div class="sep" style="left:985px"></div>

<!-- select -->
<div class="a" style="left:1003px;top:91px;width:44px;height:43px;background:#5685b4"></div>
<svg class="a" style="left:1008px;top:95px" width="36" height="33" viewBox="0 0 36 33">
  <rect x="2" y="2" width="20" height="13" fill="none" stroke="#69b535" stroke-width="1.6"/>
  <path d="M20 11V27L24 23L27.5 30L30 29L26.5 22H32Z" fill="#fff" stroke="#222" stroke-width="1"/>
</svg>
<div class="rl" style="left:998px">SELECT</div>
<svg class="a" style="left:1049px;top:141px" width="8" height="6" viewBox="0 0 8 6"><path d="M0 0H8L4 5.5Z" fill="#333"/></svg>
<!-- ============ BROWSER ============ -->
<div class="a" style="left:4px;top:158px;width:300px;height:25px;background:#d3d3d3;border:1px solid #b5b5b5"></div>
<svg class="a" style="left:9px;top:166px" width="12" height="8" viewBox="0 0 12 8"><path d="M0 4L5 0V8ZM6 4L11 0V8Z" fill="#333"/></svg>
<div class="t" style="left:31px;top:165px;font-size:12.3px;color:#5b5b5b">BROWSER</div>
<svg class="a" style="left:283px;top:165px" width="10" height="10" viewBox="0 0 10 10"><circle cx="5" cy="5" r="4.5" fill="#222"/><rect x="2.3" y="4.2" width="5.4" height="1.6" fill="#fff"/></svg>
<div class="a" style="left:299px;top:164px;width:1px;height:12px;background:#777"></div><div class="a" style="left:301px;top:164px;width:1px;height:12px;background:#aaa"></div>
<div class="a" style="left:8px;top:188px;width:6px;height:755px;background:#c6c6c6"></div>
<div class="a" style="left:8px;top:188px;width:6px;height:135px;background:#a9a9a9"></div>
<svg class="a" style="left:20px;top:191px" width="14" height="16" viewBox="0 0 14 16"><path d="M1.5 14.5H12.5V2Z" fill="#9a9a9a" stroke="#333" stroke-width="1.1" stroke-linejoin="miter"/></svg>
<div class="a" style="left:41px;top:188.5px;width:194px;height:21px;background:#cdcdcd"></div>
<div class="a" style="left:43.5px;top:190px;width:164.5px;height:18px;background:#8a8a8a"></div>
<div class="t" style="left:102px;top:193.5px;font-size:11.8px;font-weight:bold;color:#fff">work tablev1 v11</div>
<svg class="a" style="left:213px;top:192px" width="15" height="15" viewBox="0 0 15 15"><circle cx="7.5" cy="7.5" r="6.2" fill="#fff" stroke="#444" stroke-width="1.3"/><circle cx="7.5" cy="7.5" r="2.8" fill="#222"/></svg>
<svg class="a" style="left:47px;top:191px" width="12" height="16" viewBox="0 0 12 16"><path d="M6 1.6Q10.9 1.6 10.9 6.1Q10.9 8.3 9.1 9.8Q8.3 10.5 8.2 11.2H3.8Q3.7 10.5 2.9 9.8Q1.1 8.3 1.1 6.1Q1.1 1.6 6 1.6Z" fill="#f6e04a" stroke="#b59a10" stroke-width=".8"/><rect x="3.7" y="11.2" width="4.6" height="4.2" rx="1.3" fill="#555b6c"/><rect x="5" y="12" width="2" height="2.4" fill="#dfe3ea"/><ellipse cx="4.6" cy="4.6" rx="1.3" ry="1.5" fill="#fff" opacity=".85"/></svg>
<svg class="a" style="left:70px;top:190px" width="18" height="18" viewBox="0 0 18 18"><path d="M1.5 6.5L4 4H9V16.5H1.5Z" fill="#f4f4f4" stroke="#444" stroke-width="1"/><path d="M9 9.5L11.5 7H16.5V16.5H9Z" fill="#e8e8e8" stroke="#444" stroke-width="1"/><path d="M4 4L6.5 1.5H11.5V7" fill="none" stroke="#444" stroke-width="1"/></svg>
<svg class="a" style="left:40px;top:218px" width="11" height="15" viewBox="0 0 11 15"><path d="M1.2 1.2L9.8 7.5L1.2 13.8Z" fill="#fff" stroke="#2a2a2a" stroke-width="1.1" stroke-linejoin="round"/></svg>
<div class="row" style="left:59px;top:214px;width:151px"></div>
<svg class="a" style="left:62px;top:217px" width="17" height="17" viewBox="0 0 17 17"><g fill="#555"><circle cx="8.5" cy="8.5" r="5.5"/><rect x="7" y="0.5" width="3" height="16"/><rect x="0.5" y="7" width="16" height="3"/><rect x="7" y="0.5" width="3" height="16" transform="rotate(45 8.5 8.5)"/><rect x="7" y="0.5" width="3" height="16" transform="rotate(-45 8.5 8.5)"/></g><circle cx="8.5" cy="8.5" r="2.5" fill="#cbcbcb"/></svg>
<div class="rt" style="left:94px;top:219px">Document Settings</div>
<svg class="a" style="left:40px;top:244px" width="11" height="15" viewBox="0 0 11 15"><path d="M1.2 1.2L9.8 7.5L1.2 13.8Z" fill="#fff" stroke="#2a2a2a" stroke-width="1.1" stroke-linejoin="round"/></svg>
<div class="row" style="left:59px;top:240px;width:126px"></div>
<svg class="a" style="left:63px;top:245px" width="16" height="13" viewBox="0 0 16 13"><path d="M0.5 2.5V12.5H15.5V2.5H8L7 0.5H0.5Z" fill="#fafafa" stroke="#555" stroke-width="1"/><path d="M0.5 3.5H15.5" stroke="#555" stroke-width="1"/></svg>
<div class="rt" style="left:94px;top:245px">Named Views</div>
<svg class="a" style="left:40px;top:270px" width="11" height="15" viewBox="0 0 11 15"><path d="M1.2 1.2L9.8 7.5L1.2 13.8Z" fill="#fff" stroke="#2a2a2a" stroke-width="1.1" stroke-linejoin="round"/></svg>
<div class="row" style="left:59px;top:266px;width:107px"></div>
<svg class="a" style="left:65px;top:269px" width="12" height="16" viewBox="0 0 12 16"><path d="M6 1.6Q10.9 1.6 10.9 6.1Q10.9 8.3 9.1 9.8Q8.3 10.5 8.2 11.2H3.8Q3.7 10.5 2.9 9.8Q1.1 8.3 1.1 6.1Q1.1 1.6 6 1.6Z" fill="#c9dcf5" stroke="#6f8fc0" stroke-width=".8"/><rect x="3.7" y="11.2" width="4.6" height="4.2" rx="1.3" fill="#555b6c"/><rect x="5" y="12" width="2" height="2.4" fill="#dfe3ea"/><ellipse cx="4.6" cy="4.6" rx="1.3" ry="1.5" fill="#fff" opacity=".85"/></svg>
<svg class="a" style="left:89px;top:271px" width="16" height="13" viewBox="0 0 16 13"><path d="M0.5 2.5V12.5H15.5V2.5H8L7 0.5H0.5Z" fill="#fafafa" stroke="#555" stroke-width="1"/><path d="M0.5 3.5H15.5" stroke="#555" stroke-width="1"/></svg>
<div class="rt" style="left:120px;top:271px">Origin</div>
<svg class="a" style="left:40px;top:296px" width="11" height="15" viewBox="0 0 11 15"><path d="M1.2 1.2L9.8 7.5L1.2 13.8Z" fill="#fff" stroke="#2a2a2a" stroke-width="1.1" stroke-linejoin="round"/></svg>
<div class="row" style="left:59px;top:292px;width:113px"></div>
<svg class="a" style="left:65px;top:295px" width="12" height="16" viewBox="0 0 12 16"><path d="M6 1.6Q10.9 1.6 10.9 6.1Q10.9 8.3 9.1 9.8Q8.3 10.5 8.2 11.2H3.8Q3.7 10.5 2.9 9.8Q1.1 8.3 1.1 6.1Q1.1 1.6 6 1.6Z" fill="#f6e04a" stroke="#b59a10" stroke-width=".8"/><rect x="3.7" y="11.2" width="4.6" height="4.2" rx="1.3" fill="#555b6c"/><rect x="5" y="12" width="2" height="2.4" fill="#dfe3ea"/><ellipse cx="4.6" cy="4.6" rx="1.3" ry="1.5" fill="#fff" opacity=".85"/></svg>
<svg class="a" style="left:89px;top:297px" width="16" height="13" viewBox="0 0 16 13"><path d="M0.5 2.5V12.5H15.5V2.5H8L7 0.5H0.5Z" fill="#fafafa" stroke="#555" stroke-width="1"/><path d="M0.5 3.5H15.5" stroke="#555" stroke-width="1"/></svg>
<div class="rt" style="left:120px;top:297px">Bodies</div>
<svg class="a" style="left:40px;top:322px" width="11" height="15" viewBox="0 0 11 15"><path d="M1.2 1.2L9.8 7.5L1.2 13.8Z" fill="#fff" stroke="#2a2a2a" stroke-width="1.1" stroke-linejoin="round"/></svg>
<div class="row" style="left:59px;top:318px;width:123px"></div>
<svg class="a" style="left:65px;top:321px" width="12" height="16" viewBox="0 0 12 16"><path d="M6 1.6Q10.9 1.6 10.9 6.1Q10.9 8.3 9.1 9.8Q8.3 10.5 8.2 11.2H3.8Q3.7 10.5 2.9 9.8Q1.1 8.3 1.1 6.1Q1.1 1.6 6 1.6Z" fill="#f6e04a" stroke="#b59a10" stroke-width=".8"/><rect x="3.7" y="11.2" width="4.6" height="4.2" rx="1.3" fill="#555b6c"/><rect x="5" y="12" width="2" height="2.4" fill="#dfe3ea"/><ellipse cx="4.6" cy="4.6" rx="1.3" ry="1.5" fill="#fff" opacity=".85"/></svg>
<svg class="a" style="left:89px;top:323px" width="16" height="13" viewBox="0 0 16 13"><path d="M0.5 2.5V12.5H15.5V2.5H8L7 0.5H0.5Z" fill="#fafafa" stroke="#555" stroke-width="1"/><path d="M0.5 3.5H15.5" stroke="#555" stroke-width="1"/></svg>
<div class="rt" style="left:120px;top:323px">Sketches</div>
<svg class="a" style="left:40px;top:348px" width="11" height="15" viewBox="0 0 11 15"><path d="M1.2 1.2L9.8 7.5L1.2 13.8Z" fill="#fff" stroke="#2a2a2a" stroke-width="1.1" stroke-linejoin="round"/></svg>
<div class="row" style="left:59px;top:344px;width:142px"></div>
<svg class="a" style="left:65px;top:347px" width="12" height="16" viewBox="0 0 12 16"><path d="M6 1.6Q10.9 1.6 10.9 6.1Q10.9 8.3 9.1 9.8Q8.3 10.5 8.2 11.2H3.8Q3.7 10.5 2.9 9.8Q1.1 8.3 1.1 6.1Q1.1 1.6 6 1.6Z" fill="#f6e04a" stroke="#b59a10" stroke-width=".8"/><rect x="3.7" y="11.2" width="4.6" height="4.2" rx="1.3" fill="#555b6c"/><rect x="5" y="12" width="2" height="2.4" fill="#dfe3ea"/><ellipse cx="4.6" cy="4.6" rx="1.3" ry="1.5" fill="#fff" opacity=".85"/></svg>
<svg class="a" style="left:89px;top:349px" width="16" height="13" viewBox="0 0 16 13"><path d="M0.5 2.5V12.5H15.5V2.5H8L7 0.5H0.5Z" fill="#fafafa" stroke="#555" stroke-width="1"/><path d="M0.5 3.5H15.5" stroke="#555" stroke-width="1"/></svg>
<div class="rt" style="left:120px;top:349px">Construction</div>
<svg class="a" style="left:40px;top:374px" width="11" height="15" viewBox="0 0 11 15"><path d="M1.2 1.2L9.8 7.5L1.2 13.8Z" fill="#fff" stroke="#2a2a2a" stroke-width="1.1" stroke-linejoin="round"/></svg>
<div class="row" style="left:59px;top:370px;width:152px"></div>
<svg class="a" style="left:65px;top:373px" width="12" height="16" viewBox="0 0 12 16"><path d="M6 1.6Q10.9 1.6 10.9 6.1Q10.9 8.3 9.1 9.8Q8.3 10.5 8.2 11.2H3.8Q3.7 10.5 2.9 9.8Q1.1 8.3 1.1 6.1Q1.1 1.6 6 1.6Z" fill="#f6e04a" stroke="#b59a10" stroke-width=".8"/><rect x="3.7" y="11.2" width="4.6" height="4.2" rx="1.3" fill="#555b6c"/><rect x="5" y="12" width="2" height="2.4" fill="#dfe3ea"/><ellipse cx="4.6" cy="4.6" rx="1.3" ry="1.5" fill="#fff" opacity=".85"/></svg>
<svg class="a" style="left:88px;top:372px" width="18" height="18" viewBox="0 0 18 18"><path d="M1.8 4.8L4.9 1.7H15Q16.4 1.7 16.4 3.1V15Q16.4 16.4 15 16.4H3.2Q1.8 16.4 1.8 15Z" fill="#fbfbfc"/><rect x="2.6" y="6" width="8" height="9.6" fill="#dfe2e7"/><path d="M16.4 12.2V3.1Q16.4 1.7 15 1.7H4.9L1.8 4.8V15Q1.8 16.4 3.2 16.4H13" fill="none" stroke="#2d2f33" stroke-width="1.25"/><path d="M10.2 7.1H14.4V9.2L13.5 10.2L15.6 12.3V13.7H9V12.3L11.1 10.2L10.2 9.2Z" fill="#f7a21b" stroke="#b0260c" stroke-width=".9" stroke-linejoin="round"/><rect x="11" y="7.9" width="2.5" height="0.9" fill="#fff"/><rect x="10" y="12.5" width="3" height="0.8" fill="#fff"/><path d="M12.3 13.8V17.4" stroke="#2d2f33" stroke-width="1.1"/></svg>
<div class="rt" style="left:120px;top:375px">Component1:1</div>
<svg class="a" style="left:40px;top:400px" width="11" height="15" viewBox="0 0 11 15"><path d="M1.2 1.2L9.8 7.5L1.2 13.8Z" fill="#fff" stroke="#2a2a2a" stroke-width="1.1" stroke-linejoin="round"/></svg>
<div class="row" style="left:59px;top:396px;width:152px"></div>
<svg class="a" style="left:65px;top:399px" width="12" height="16" viewBox="0 0 12 16"><path d="M6 1.6Q10.9 1.6 10.9 6.1Q10.9 8.3 9.1 9.8Q8.3 10.5 8.2 11.2H3.8Q3.7 10.5 2.9 9.8Q1.1 8.3 1.1 6.1Q1.1 1.6 6 1.6Z" fill="#f6e04a" stroke="#b59a10" stroke-width=".8"/><rect x="3.7" y="11.2" width="4.6" height="4.2" rx="1.3" fill="#555b6c"/><rect x="5" y="12" width="2" height="2.4" fill="#dfe3ea"/><ellipse cx="4.6" cy="4.6" rx="1.3" ry="1.5" fill="#fff" opacity=".85"/></svg>
<svg class="a" style="left:88px;top:398px" width="18" height="18" viewBox="0 0 18 18"><path d="M1.8 4.8L4.9 1.7H15Q16.4 1.7 16.4 3.1V15Q16.4 16.4 15 16.4H3.2Q1.8 16.4 1.8 15Z" fill="#fbfbfc"/><rect x="2.6" y="6" width="8" height="9.6" fill="#dfe2e7"/><path d="M16.4 12.2V3.1Q16.4 1.7 15 1.7H4.9L1.8 4.8V15Q1.8 16.4 3.2 16.4H13" fill="none" stroke="#2d2f33" stroke-width="1.25"/><path d="M10.2 7.1H14.4V9.2L13.5 10.2L15.6 12.3V13.7H9V12.3L11.1 10.2L10.2 9.2Z" fill="#f7a21b" stroke="#b0260c" stroke-width=".9" stroke-linejoin="round"/><rect x="11" y="7.9" width="2.5" height="0.9" fill="#fff"/><rect x="10" y="12.5" width="3" height="0.8" fill="#fff"/><path d="M12.3 13.8V17.4" stroke="#2d2f33" stroke-width="1.1"/></svg>
<div class="rt" style="left:120px;top:401px">Component2:1</div>
<svg class="a" style="left:40px;top:426px" width="11" height="15" viewBox="0 0 11 15"><path d="M1.2 1.2L9.8 7.5L1.2 13.8Z" fill="#fff" stroke="#2a2a2a" stroke-width="1.1" stroke-linejoin="round"/></svg>
<div class="row" style="left:59px;top:422px;width:152px"></div>
<svg class="a" style="left:65px;top:425px" width="12" height="16" viewBox="0 0 12 16"><path d="M6 1.6Q10.9 1.6 10.9 6.1Q10.9 8.3 9.1 9.8Q8.3 10.5 8.2 11.2H3.8Q3.7 10.5 2.9 9.8Q1.1 8.3 1.1 6.1Q1.1 1.6 6 1.6Z" fill="#f6e04a" stroke="#b59a10" stroke-width=".8"/><rect x="3.7" y="11.2" width="4.6" height="4.2" rx="1.3" fill="#555b6c"/><rect x="5" y="12" width="2" height="2.4" fill="#dfe3ea"/><ellipse cx="4.6" cy="4.6" rx="1.3" ry="1.5" fill="#fff" opacity=".85"/></svg>
<svg class="a" style="left:88px;top:424px" width="18" height="18" viewBox="0 0 18 18"><path d="M1.8 4.8L4.9 1.7H15Q16.4 1.7 16.4 3.1V15Q16.4 16.4 15 16.4H3.2Q1.8 16.4 1.8 15Z" fill="#fbfbfc"/><rect x="2.6" y="6" width="8" height="9.6" fill="#dfe2e7"/><path d="M16.4 12.2V3.1Q16.4 1.7 15 1.7H4.9L1.8 4.8V15Q1.8 16.4 3.2 16.4H13" fill="none" stroke="#2d2f33" stroke-width="1.25"/><path d="M10.2 7.1H14.4V9.2L13.5 10.2L15.6 12.3V13.7H9V12.3L11.1 10.2L10.2 9.2Z" fill="#f7a21b" stroke="#b0260c" stroke-width=".9" stroke-linejoin="round"/><rect x="11" y="7.9" width="2.5" height="0.9" fill="#fff"/><rect x="10" y="12.5" width="3" height="0.8" fill="#fff"/><path d="M12.3 13.8V17.4" stroke="#2d2f33" stroke-width="1.1"/></svg>
<div class="rt" style="left:120px;top:427px">Component3:1</div>
<svg class="a" style="left:40px;top:452px" width="11" height="15" viewBox="0 0 11 15"><path d="M1.2 1.2L9.8 7.5L1.2 13.8Z" fill="#fff" stroke="#2a2a2a" stroke-width="1.1" stroke-linejoin="round"/></svg>
<div class="row" style="left:59px;top:448px;width:152px"></div>
<svg class="a" style="left:65px;top:451px" width="12" height="16" viewBox="0 0 12 16"><path d="M6 1.6Q10.9 1.6 10.9 6.1Q10.9 8.3 9.1 9.8Q8.3 10.5 8.2 11.2H3.8Q3.7 10.5 2.9 9.8Q1.1 8.3 1.1 6.1Q1.1 1.6 6 1.6Z" fill="#f6e04a" stroke="#b59a10" stroke-width=".8"/><rect x="3.7" y="11.2" width="4.6" height="4.2" rx="1.3" fill="#555b6c"/><rect x="5" y="12" width="2" height="2.4" fill="#dfe3ea"/><ellipse cx="4.6" cy="4.6" rx="1.3" ry="1.5" fill="#fff" opacity=".85"/></svg>
<svg class="a" style="left:88px;top:450px" width="18" height="18" viewBox="0 0 18 18"><path d="M1.8 4.8L4.9 1.7H15Q16.4 1.7 16.4 3.1V15Q16.4 16.4 15 16.4H3.2Q1.8 16.4 1.8 15Z" fill="#fbfbfc"/><rect x="2.6" y="6" width="8" height="9.6" fill="#dfe2e7"/><path d="M16.4 12.2V3.1Q16.4 1.7 15 1.7H4.9L1.8 4.8V15Q1.8 16.4 3.2 16.4H13" fill="none" stroke="#2d2f33" stroke-width="1.25"/><path d="M10.2 7.1H14.4V9.2L13.5 10.2L15.6 12.3V13.7H9V12.3L11.1 10.2L10.2 9.2Z" fill="#f7a21b" stroke="#b0260c" stroke-width=".9" stroke-linejoin="round"/><rect x="11" y="7.9" width="2.5" height="0.9" fill="#fff"/><rect x="10" y="12.5" width="3" height="0.8" fill="#fff"/><path d="M12.3 13.8V17.4" stroke="#2d2f33" stroke-width="1.1"/></svg>
<div class="rt" style="left:120px;top:453px">Component4:1</div>
<svg class="a" style="left:40px;top:478px" width="11" height="15" viewBox="0 0 11 15"><path d="M1.2 1.2L9.8 7.5L1.2 13.8Z" fill="#fff" stroke="#2a2a2a" stroke-width="1.1" stroke-linejoin="round"/></svg>
<div class="row" style="left:59px;top:474px;width:152px"></div>
<svg class="a" style="left:65px;top:477px" width="12" height="16" viewBox="0 0 12 16"><path d="M6 1.6Q10.9 1.6 10.9 6.1Q10.9 8.3 9.1 9.8Q8.3 10.5 8.2 11.2H3.8Q3.7 10.5 2.9 9.8Q1.1 8.3 1.1 6.1Q1.1 1.6 6 1.6Z" fill="#f6e04a" stroke="#b59a10" stroke-width=".8"/><rect x="3.7" y="11.2" width="4.6" height="4.2" rx="1.3" fill="#555b6c"/><rect x="5" y="12" width="2" height="2.4" fill="#dfe3ea"/><ellipse cx="4.6" cy="4.6" rx="1.3" ry="1.5" fill="#fff" opacity=".85"/></svg>
<svg class="a" style="left:88px;top:476px" width="18" height="18" viewBox="0 0 18 18"><path d="M1.8 4.8L4.9 1.7H15Q16.4 1.7 16.4 3.1V15Q16.4 16.4 15 16.4H3.2Q1.8 16.4 1.8 15Z" fill="#fbfbfc"/><rect x="2.6" y="6" width="8" height="9.6" fill="#dfe2e7"/><path d="M16.4 12.2V3.1Q16.4 1.7 15 1.7H4.9L1.8 4.8V15Q1.8 16.4 3.2 16.4H13" fill="none" stroke="#2d2f33" stroke-width="1.25"/><path d="M10.2 7.1H14.4V9.2L13.5 10.2L15.6 12.3V13.7H9V12.3L11.1 10.2L10.2 9.2Z" fill="#f7a21b" stroke="#b0260c" stroke-width=".9" stroke-linejoin="round"/><rect x="11" y="7.9" width="2.5" height="0.9" fill="#fff"/><rect x="10" y="12.5" width="3" height="0.8" fill="#fff"/><path d="M12.3 13.8V17.4" stroke="#2d2f33" stroke-width="1.1"/></svg>
<div class="rt" style="left:120px;top:479px">Component5:1</div>
<svg class="a" style="left:40px;top:504px" width="11" height="15" viewBox="0 0 11 15"><path d="M1.2 1.2L9.8 7.5L1.2 13.8Z" fill="#fff" stroke="#2a2a2a" stroke-width="1.1" stroke-linejoin="round"/></svg>
<div class="row" style="left:59px;top:500px;width:152px"></div>
<svg class="a" style="left:65px;top:503px" width="12" height="16" viewBox="0 0 12 16"><path d="M6 1.6Q10.9 1.6 10.9 6.1Q10.9 8.3 9.1 9.8Q8.3 10.5 8.2 11.2H3.8Q3.7 10.5 2.9 9.8Q1.1 8.3 1.1 6.1Q1.1 1.6 6 1.6Z" fill="#f6e04a" stroke="#b59a10" stroke-width=".8"/><rect x="3.7" y="11.2" width="4.6" height="4.2" rx="1.3" fill="#555b6c"/><rect x="5" y="12" width="2" height="2.4" fill="#dfe3ea"/><ellipse cx="4.6" cy="4.6" rx="1.3" ry="1.5" fill="#fff" opacity=".85"/></svg>
<svg class="a" style="left:88px;top:502px" width="18" height="18" viewBox="0 0 18 18"><path d="M1.8 4.8L4.9 1.7H15Q16.4 1.7 16.4 3.1V15Q16.4 16.4 15 16.4H3.2Q1.8 16.4 1.8 15Z" fill="#fbfbfc"/><rect x="2.6" y="6" width="8" height="9.6" fill="#dfe2e7"/><path d="M16.4 12.2V3.1Q16.4 1.7 15 1.7H4.9L1.8 4.8V15Q1.8 16.4 3.2 16.4H13" fill="none" stroke="#2d2f33" stroke-width="1.25"/><path d="M10.2 7.1H14.4V9.2L13.5 10.2L15.6 12.3V13.7H9V12.3L11.1 10.2L10.2 9.2Z" fill="#f7a21b" stroke="#b0260c" stroke-width=".9" stroke-linejoin="round"/><rect x="11" y="7.9" width="2.5" height="0.9" fill="#fff"/><rect x="10" y="12.5" width="3" height="0.8" fill="#fff"/><path d="M12.3 13.8V17.4" stroke="#2d2f33" stroke-width="1.1"/></svg>
<div class="rt" style="left:120px;top:505px">Component6:1</div>
<svg class="a" style="left:40px;top:530px" width="11" height="15" viewBox="0 0 11 15"><path d="M1.2 1.2L9.8 7.5L1.2 13.8Z" fill="#fff" stroke="#2a2a2a" stroke-width="1.1" stroke-linejoin="round"/></svg>
<div class="row" style="left:59px;top:526px;width:152px"></div>
<svg class="a" style="left:65px;top:529px" width="12" height="16" viewBox="0 0 12 16"><path d="M6 1.6Q10.9 1.6 10.9 6.1Q10.9 8.3 9.1 9.8Q8.3 10.5 8.2 11.2H3.8Q3.7 10.5 2.9 9.8Q1.1 8.3 1.1 6.1Q1.1 1.6 6 1.6Z" fill="#f6e04a" stroke="#b59a10" stroke-width=".8"/><rect x="3.7" y="11.2" width="4.6" height="4.2" rx="1.3" fill="#555b6c"/><rect x="5" y="12" width="2" height="2.4" fill="#dfe3ea"/><ellipse cx="4.6" cy="4.6" rx="1.3" ry="1.5" fill="#fff" opacity=".85"/></svg>
<svg class="a" style="left:88px;top:528px" width="18" height="18" viewBox="0 0 18 18"><path d="M1.8 4.8L4.9 1.7H15Q16.4 1.7 16.4 3.1V15Q16.4 16.4 15 16.4H3.2Q1.8 16.4 1.8 15Z" fill="#fbfbfc"/><rect x="2.6" y="6" width="8" height="9.6" fill="#dfe2e7"/><path d="M16.4 12.2V3.1Q16.4 1.7 15 1.7H4.9L1.8 4.8V15Q1.8 16.4 3.2 16.4H13" fill="none" stroke="#2d2f33" stroke-width="1.25"/><path d="M10.2 7.1H14.4V9.2L13.5 10.2L15.6 12.3V13.7H9V12.3L11.1 10.2L10.2 9.2Z" fill="#f7a21b" stroke="#b0260c" stroke-width=".9" stroke-linejoin="round"/><rect x="11" y="7.9" width="2.5" height="0.9" fill="#fff"/><rect x="10" y="12.5" width="3" height="0.8" fill="#fff"/><path d="M12.3 13.8V17.4" stroke="#2d2f33" stroke-width="1.1"/></svg>
<div class="rt" style="left:120px;top:531px">Component7:1</div>
<svg class="a" style="left:40px;top:556px" width="11" height="15" viewBox="0 0 11 15"><path d="M1.2 1.2L9.8 7.5L1.2 13.8Z" fill="#fff" stroke="#2a2a2a" stroke-width="1.1" stroke-linejoin="round"/></svg>
<div class="row" style="left:59px;top:552px;width:152px"></div>
<svg class="a" style="left:65px;top:555px" width="12" height="16" viewBox="0 0 12 16"><path d="M6 1.6Q10.9 1.6 10.9 6.1Q10.9 8.3 9.1 9.8Q8.3 10.5 8.2 11.2H3.8Q3.7 10.5 2.9 9.8Q1.1 8.3 1.1 6.1Q1.1 1.6 6 1.6Z" fill="#f6e04a" stroke="#b59a10" stroke-width=".8"/><rect x="3.7" y="11.2" width="4.6" height="4.2" rx="1.3" fill="#555b6c"/><rect x="5" y="12" width="2" height="2.4" fill="#dfe3ea"/><ellipse cx="4.6" cy="4.6" rx="1.3" ry="1.5" fill="#fff" opacity=".85"/></svg>
<svg class="a" style="left:88px;top:554px" width="18" height="18" viewBox="0 0 18 18"><path d="M1.8 4.8L4.9 1.7H15Q16.4 1.7 16.4 3.1V15Q16.4 16.4 15 16.4H3.2Q1.8 16.4 1.8 15Z" fill="#fbfbfc"/><rect x="2.6" y="6" width="8" height="9.6" fill="#dfe2e7"/><path d="M16.4 12.2V3.1Q16.4 1.7 15 1.7H4.9L1.8 4.8V15Q1.8 16.4 3.2 16.4H13" fill="none" stroke="#2d2f33" stroke-width="1.25"/><path d="M10.2 7.1H14.4V9.2L13.5 10.2L15.6 12.3V13.7H9V12.3L11.1 10.2L10.2 9.2Z" fill="#f7a21b" stroke="#b0260c" stroke-width=".9" stroke-linejoin="round"/><rect x="11" y="7.9" width="2.5" height="0.9" fill="#fff"/><rect x="10" y="12.5" width="3" height="0.8" fill="#fff"/><path d="M12.3 13.8V17.4" stroke="#2d2f33" stroke-width="1.1"/></svg>
<div class="rt" style="left:120px;top:557px">Component8:1</div>
<svg class="a" style="left:40px;top:582px" width="11" height="15" viewBox="0 0 11 15"><path d="M1.2 1.2L9.8 7.5L1.2 13.8Z" fill="#fff" stroke="#2a2a2a" stroke-width="1.1" stroke-linejoin="round"/></svg>
<div class="row" style="left:59px;top:578px;width:152px"></div>
<svg class="a" style="left:65px;top:581px" width="12" height="16" viewBox="0 0 12 16"><path d="M6 1.6Q10.9 1.6 10.9 6.1Q10.9 8.3 9.1 9.8Q8.3 10.5 8.2 11.2H3.8Q3.7 10.5 2.9 9.8Q1.1 8.3 1.1 6.1Q1.1 1.6 6 1.6Z" fill="#f6e04a" stroke="#b59a10" stroke-width=".8"/><rect x="3.7" y="11.2" width="4.6" height="4.2" rx="1.3" fill="#555b6c"/><rect x="5" y="12" width="2" height="2.4" fill="#dfe3ea"/><ellipse cx="4.6" cy="4.6" rx="1.3" ry="1.5" fill="#fff" opacity=".85"/></svg>
<svg class="a" style="left:88px;top:580px" width="18" height="18" viewBox="0 0 18 18"><path d="M1.8 4.8L4.9 1.7H15Q16.4 1.7 16.4 3.1V15Q16.4 16.4 15 16.4H3.2Q1.8 16.4 1.8 15Z" fill="#fbfbfc"/><rect x="2.6" y="6" width="8" height="9.6" fill="#dfe2e7"/><path d="M16.4 12.2V3.1Q16.4 1.7 15 1.7H4.9L1.8 4.8V15Q1.8 16.4 3.2 16.4H13" fill="none" stroke="#2d2f33" stroke-width="1.25"/><path d="M10.2 7.1H14.4V9.2L13.5 10.2L15.6 12.3V13.7H9V12.3L11.1 10.2L10.2 9.2Z" fill="#f7a21b" stroke="#b0260c" stroke-width=".9" stroke-linejoin="round"/><rect x="11" y="7.9" width="2.5" height="0.9" fill="#fff"/><rect x="10" y="12.5" width="3" height="0.8" fill="#fff"/><path d="M12.3 13.8V17.4" stroke="#2d2f33" stroke-width="1.1"/></svg>
<div class="rt" style="left:120px;top:583px">Component9:1</div>
<svg class="a" style="left:40px;top:608px" width="11" height="15" viewBox="0 0 11 15"><path d="M1.2 1.2L9.8 7.5L1.2 13.8Z" fill="#fff" stroke="#2a2a2a" stroke-width="1.1" stroke-linejoin="round"/></svg>
<div class="row" style="left:59px;top:604px;width:163px"></div>
<svg class="a" style="left:65px;top:607px" width="12" height="16" viewBox="0 0 12 16"><path d="M6 1.6Q10.9 1.6 10.9 6.1Q10.9 8.3 9.1 9.8Q8.3 10.5 8.2 11.2H3.8Q3.7 10.5 2.9 9.8Q1.1 8.3 1.1 6.1Q1.1 1.6 6 1.6Z" fill="#f6e04a" stroke="#b59a10" stroke-width=".8"/><rect x="3.7" y="11.2" width="4.6" height="4.2" rx="1.3" fill="#555b6c"/><rect x="5" y="12" width="2" height="2.4" fill="#dfe3ea"/><ellipse cx="4.6" cy="4.6" rx="1.3" ry="1.5" fill="#fff" opacity=".85"/></svg>
<svg class="a" style="left:88px;top:606px" width="18" height="18" viewBox="0 0 18 18"><path d="M1.8 4.8L4.9 1.7H15Q16.4 1.7 16.4 3.1V15Q16.4 16.4 15 16.4H3.2Q1.8 16.4 1.8 15Z" fill="#fbfbfc"/><rect x="2.6" y="6" width="8" height="9.6" fill="#dfe2e7"/><path d="M16.4 12.2V3.1Q16.4 1.7 15 1.7H4.9L1.8 4.8V15Q1.8 16.4 3.2 16.4H13" fill="none" stroke="#2d2f33" stroke-width="1.25"/><path d="M10.2 7.1H14.4V9.2L13.5 10.2L15.6 12.3V13.7H9V12.3L11.1 10.2L10.2 9.2Z" fill="#f7a21b" stroke="#b0260c" stroke-width=".9" stroke-linejoin="round"/><rect x="11" y="7.9" width="2.5" height="0.9" fill="#fff"/><rect x="10" y="12.5" width="3" height="0.8" fill="#fff"/><path d="M12.3 13.8V17.4" stroke="#2d2f33" stroke-width="1.1"/></svg>
<div class="rt" style="left:120px;top:609px">Component10:1</div>
<svg class="a" style="left:40px;top:634px" width="11" height="15" viewBox="0 0 11 15"><path d="M1.2 1.2L9.8 7.5L1.2 13.8Z" fill="#fff" stroke="#2a2a2a" stroke-width="1.1" stroke-linejoin="round"/></svg>
<div class="row" style="left:59px;top:630px;width:163px"></div>
<svg class="a" style="left:65px;top:633px" width="12" height="16" viewBox="0 0 12 16"><path d="M6 1.6Q10.9 1.6 10.9 6.1Q10.9 8.3 9.1 9.8Q8.3 10.5 8.2 11.2H3.8Q3.7 10.5 2.9 9.8Q1.1 8.3 1.1 6.1Q1.1 1.6 6 1.6Z" fill="#f6e04a" stroke="#b59a10" stroke-width=".8"/><rect x="3.7" y="11.2" width="4.6" height="4.2" rx="1.3" fill="#555b6c"/><rect x="5" y="12" width="2" height="2.4" fill="#dfe3ea"/><ellipse cx="4.6" cy="4.6" rx="1.3" ry="1.5" fill="#fff" opacity=".85"/></svg>
<svg class="a" style="left:88px;top:632px" width="18" height="18" viewBox="0 0 18 18"><path d="M1.8 4.8L4.9 1.7H15Q16.4 1.7 16.4 3.1V15Q16.4 16.4 15 16.4H3.2Q1.8 16.4 1.8 15Z" fill="#fbfbfc"/><rect x="2.6" y="6" width="8" height="9.6" fill="#dfe2e7"/><path d="M16.4 12.2V3.1Q16.4 1.7 15 1.7H4.9L1.8 4.8V15Q1.8 16.4 3.2 16.4H13" fill="none" stroke="#2d2f33" stroke-width="1.25"/><path d="M10.2 7.1H14.4V9.2L13.5 10.2L15.6 12.3V13.7H9V12.3L11.1 10.2L10.2 9.2Z" fill="#f7a21b" stroke="#b0260c" stroke-width=".9" stroke-linejoin="round"/><rect x="11" y="7.9" width="2.5" height="0.9" fill="#fff"/><rect x="10" y="12.5" width="3" height="0.8" fill="#fff"/><path d="M12.3 13.8V17.4" stroke="#2d2f33" stroke-width="1.1"/></svg>
<div class="rt" style="left:120px;top:635px">Component11:1</div>
<svg class="a" style="left:40px;top:660px" width="11" height="15" viewBox="0 0 11 15"><path d="M1.2 1.2L9.8 7.5L1.2 13.8Z" fill="#fff" stroke="#2a2a2a" stroke-width="1.1" stroke-linejoin="round"/></svg>
<div class="row" style="left:59px;top:656px;width:163px"></div>
<svg class="a" style="left:65px;top:659px" width="12" height="16" viewBox="0 0 12 16"><path d="M6 1.6Q10.9 1.6 10.9 6.1Q10.9 8.3 9.1 9.8Q8.3 10.5 8.2 11.2H3.8Q3.7 10.5 2.9 9.8Q1.1 8.3 1.1 6.1Q1.1 1.6 6 1.6Z" fill="#f6e04a" stroke="#b59a10" stroke-width=".8"/><rect x="3.7" y="11.2" width="4.6" height="4.2" rx="1.3" fill="#555b6c"/><rect x="5" y="12" width="2" height="2.4" fill="#dfe3ea"/><ellipse cx="4.6" cy="4.6" rx="1.3" ry="1.5" fill="#fff" opacity=".85"/></svg>
<svg class="a" style="left:88px;top:658px" width="18" height="18" viewBox="0 0 18 18"><path d="M1.8 4.8L4.9 1.7H15Q16.4 1.7 16.4 3.1V15Q16.4 16.4 15 16.4H3.2Q1.8 16.4 1.8 15Z" fill="#fbfbfc"/><rect x="2.6" y="6" width="8" height="9.6" fill="#dfe2e7"/><path d="M16.4 12.2V3.1Q16.4 1.7 15 1.7H4.9L1.8 4.8V15Q1.8 16.4 3.2 16.4H13" fill="none" stroke="#2d2f33" stroke-width="1.25"/><path d="M10.2 7.1H14.4V9.2L13.5 10.2L15.6 12.3V13.7H9V12.3L11.1 10.2L10.2 9.2Z" fill="#f7a21b" stroke="#b0260c" stroke-width=".9" stroke-linejoin="round"/><rect x="11" y="7.9" width="2.5" height="0.9" fill="#fff"/><rect x="10" y="12.5" width="3" height="0.8" fill="#fff"/><path d="M12.3 13.8V17.4" stroke="#2d2f33" stroke-width="1.1"/></svg>
<div class="rt" style="left:120px;top:661px">Component12:1</div>
<svg class="a" style="left:40px;top:686px" width="11" height="15" viewBox="0 0 11 15"><path d="M1.2 1.2L9.8 7.5L1.2 13.8Z" fill="#fff" stroke="#2a2a2a" stroke-width="1.1" stroke-linejoin="round"/></svg>
<div class="row" style="left:59px;top:682px;width:163px"></div>
<svg class="a" style="left:65px;top:685px" width="12" height="16" viewBox="0 0 12 16"><path d="M6 1.6Q10.9 1.6 10.9 6.1Q10.9 8.3 9.1 9.8Q8.3 10.5 8.2 11.2H3.8Q3.7 10.5 2.9 9.8Q1.1 8.3 1.1 6.1Q1.1 1.6 6 1.6Z" fill="#f6e04a" stroke="#b59a10" stroke-width=".8"/><rect x="3.7" y="11.2" width="4.6" height="4.2" rx="1.3" fill="#555b6c"/><rect x="5" y="12" width="2" height="2.4" fill="#dfe3ea"/><ellipse cx="4.6" cy="4.6" rx="1.3" ry="1.5" fill="#fff" opacity=".85"/></svg>
<svg class="a" style="left:88px;top:684px" width="18" height="18" viewBox="0 0 18 18"><path d="M1.8 4.8L4.9 1.7H15Q16.4 1.7 16.4 3.1V15Q16.4 16.4 15 16.4H3.2Q1.8 16.4 1.8 15Z" fill="#fbfbfc"/><rect x="2.6" y="6" width="8" height="9.6" fill="#dfe2e7"/><path d="M16.4 12.2V3.1Q16.4 1.7 15 1.7H4.9L1.8 4.8V15Q1.8 16.4 3.2 16.4H13" fill="none" stroke="#2d2f33" stroke-width="1.25"/><path d="M10.2 7.1H14.4V9.2L13.5 10.2L15.6 12.3V13.7H9V12.3L11.1 10.2L10.2 9.2Z" fill="#f7a21b" stroke="#b0260c" stroke-width=".9" stroke-linejoin="round"/><rect x="11" y="7.9" width="2.5" height="0.9" fill="#fff"/><rect x="10" y="12.5" width="3" height="0.8" fill="#fff"/><path d="M12.3 13.8V17.4" stroke="#2d2f33" stroke-width="1.1"/></svg>
<div class="rt" style="left:120px;top:687px">Component13:1</div>
<svg class="a" style="left:40px;top:712px" width="11" height="15" viewBox="0 0 11 15"><path d="M1.2 1.2L9.8 7.5L1.2 13.8Z" fill="#fff" stroke="#2a2a2a" stroke-width="1.1" stroke-linejoin="round"/></svg>
<div class="row" style="left:59px;top:708px;width:163px"></div>
<svg class="a" style="left:65px;top:711px" width="12" height="16" viewBox="0 0 12 16"><path d="M6 1.6Q10.9 1.6 10.9 6.1Q10.9 8.3 9.1 9.8Q8.3 10.5 8.2 11.2H3.8Q3.7 10.5 2.9 9.8Q1.1 8.3 1.1 6.1Q1.1 1.6 6 1.6Z" fill="#f6e04a" stroke="#b59a10" stroke-width=".8"/><rect x="3.7" y="11.2" width="4.6" height="4.2" rx="1.3" fill="#555b6c"/><rect x="5" y="12" width="2" height="2.4" fill="#dfe3ea"/><ellipse cx="4.6" cy="4.6" rx="1.3" ry="1.5" fill="#fff" opacity=".85"/></svg>
<svg class="a" style="left:88px;top:710px" width="18" height="18" viewBox="0 0 18 18"><path d="M1.8 4.8L4.9 1.7H15Q16.4 1.7 16.4 3.1V15Q16.4 16.4 15 16.4H3.2Q1.8 16.4 1.8 15Z" fill="#fbfbfc"/><rect x="2.6" y="6" width="8" height="9.6" fill="#dfe2e7"/><path d="M16.4 12.2V3.1Q16.4 1.7 15 1.7H4.9L1.8 4.8V15Q1.8 16.4 3.2 16.4H13" fill="none" stroke="#2d2f33" stroke-width="1.25"/><path d="M10.2 7.1H14.4V9.2L13.5 10.2L15.6 12.3V13.7H9V12.3L11.1 10.2L10.2 9.2Z" fill="#f7a21b" stroke="#b0260c" stroke-width=".9" stroke-linejoin="round"/><rect x="11" y="7.9" width="2.5" height="0.9" fill="#fff"/><rect x="10" y="12.5" width="3" height="0.8" fill="#fff"/><path d="M12.3 13.8V17.4" stroke="#2d2f33" stroke-width="1.1"/></svg>
<div class="rt" style="left:120px;top:713px">Component14:1</div>
<svg class="a" style="left:40px;top:738px" width="11" height="15" viewBox="0 0 11 15"><path d="M1.2 1.2L9.8 7.5L1.2 13.8Z" fill="#fff" stroke="#2a2a2a" stroke-width="1.1" stroke-linejoin="round"/></svg>
<div class="row" style="left:59px;top:734px;width:163px"></div>
<svg class="a" style="left:65px;top:737px" width="12" height="16" viewBox="0 0 12 16"><path d="M6 1.6Q10.9 1.6 10.9 6.1Q10.9 8.3 9.1 9.8Q8.3 10.5 8.2 11.2H3.8Q3.7 10.5 2.9 9.8Q1.1 8.3 1.1 6.1Q1.1 1.6 6 1.6Z" fill="#f6e04a" stroke="#b59a10" stroke-width=".8"/><rect x="3.7" y="11.2" width="4.6" height="4.2" rx="1.3" fill="#555b6c"/><rect x="5" y="12" width="2" height="2.4" fill="#dfe3ea"/><ellipse cx="4.6" cy="4.6" rx="1.3" ry="1.5" fill="#fff" opacity=".85"/></svg>
<svg class="a" style="left:88px;top:736px" width="18" height="18" viewBox="0 0 18 18"><path d="M1.8 4.8L4.9 1.7H15Q16.4 1.7 16.4 3.1V15Q16.4 16.4 15 16.4H3.2Q1.8 16.4 1.8 15Z" fill="#fbfbfc"/><rect x="2.6" y="6" width="8" height="9.6" fill="#dfe2e7"/><path d="M16.4 12.2V3.1Q16.4 1.7 15 1.7H4.9L1.8 4.8V15Q1.8 16.4 3.2 16.4H13" fill="none" stroke="#2d2f33" stroke-width="1.25"/><path d="M10.2 7.1H14.4V9.2L13.5 10.2L15.6 12.3V13.7H9V12.3L11.1 10.2L10.2 9.2Z" fill="#f7a21b" stroke="#b0260c" stroke-width=".9" stroke-linejoin="round"/><rect x="11" y="7.9" width="2.5" height="0.9" fill="#fff"/><rect x="10" y="12.5" width="3" height="0.8" fill="#fff"/><path d="M12.3 13.8V17.4" stroke="#2d2f33" stroke-width="1.1"/></svg>
<div class="rt" style="left:120px;top:739px">Component15:1</div>
<svg class="a" style="left:40px;top:764px" width="11" height="15" viewBox="0 0 11 15"><path d="M1.2 1.2L9.8 7.5L1.2 13.8Z" fill="#fff" stroke="#2a2a2a" stroke-width="1.1" stroke-linejoin="round"/></svg>
<div class="row" style="left:59px;top:760px;width:163px"></div>
<svg class="a" style="left:65px;top:763px" width="12" height="16" viewBox="0 0 12 16"><path d="M6 1.6Q10.9 1.6 10.9 6.1Q10.9 8.3 9.1 9.8Q8.3 10.5 8.2 11.2H3.8Q3.7 10.5 2.9 9.8Q1.1 8.3 1.1 6.1Q1.1 1.6 6 1.6Z" fill="#f6e04a" stroke="#b59a10" stroke-width=".8"/><rect x="3.7" y="11.2" width="4.6" height="4.2" rx="1.3" fill="#555b6c"/><rect x="5" y="12" width="2" height="2.4" fill="#dfe3ea"/><ellipse cx="4.6" cy="4.6" rx="1.3" ry="1.5" fill="#fff" opacity=".85"/></svg>
<svg class="a" style="left:88px;top:762px" width="18" height="18" viewBox="0 0 18 18"><path d="M1.8 4.8L4.9 1.7H15Q16.4 1.7 16.4 3.1V15Q16.4 16.4 15 16.4H3.2Q1.8 16.4 1.8 15Z" fill="#fbfbfc"/><rect x="2.6" y="6" width="8" height="9.6" fill="#dfe2e7"/><path d="M16.4 12.2V3.1Q16.4 1.7 15 1.7H4.9L1.8 4.8V15Q1.8 16.4 3.2 16.4H13" fill="none" stroke="#2d2f33" stroke-width="1.25"/><path d="M10.2 7.1H14.4V9.2L13.5 10.2L15.6 12.3V13.7H9V12.3L11.1 10.2L10.2 9.2Z" fill="#f7a21b" stroke="#b0260c" stroke-width=".9" stroke-linejoin="round"/><rect x="11" y="7.9" width="2.5" height="0.9" fill="#fff"/><rect x="10" y="12.5" width="3" height="0.8" fill="#fff"/><path d="M12.3 13.8V17.4" stroke="#2d2f33" stroke-width="1.1"/></svg>
<div class="rt" style="left:120px;top:765px">Component16:1</div>
<svg class="a" style="left:40px;top:790px" width="11" height="15" viewBox="0 0 11 15"><path d="M1.2 1.2L9.8 7.5L1.2 13.8Z" fill="#fff" stroke="#2a2a2a" stroke-width="1.1" stroke-linejoin="round"/></svg>
<div class="row" style="left:59px;top:786px;width:163px"></div>
<svg class="a" style="left:65px;top:789px" width="12" height="16" viewBox="0 0 12 16"><path d="M6 1.6Q10.9 1.6 10.9 6.1Q10.9 8.3 9.1 9.8Q8.3 10.5 8.2 11.2H3.8Q3.7 10.5 2.9 9.8Q1.1 8.3 1.1 6.1Q1.1 1.6 6 1.6Z" fill="#f6e04a" stroke="#b59a10" stroke-width=".8"/><rect x="3.7" y="11.2" width="4.6" height="4.2" rx="1.3" fill="#555b6c"/><rect x="5" y="12" width="2" height="2.4" fill="#dfe3ea"/><ellipse cx="4.6" cy="4.6" rx="1.3" ry="1.5" fill="#fff" opacity=".85"/></svg>
<svg class="a" style="left:88px;top:788px" width="18" height="18" viewBox="0 0 18 18"><path d="M1.8 4.8L4.9 1.7H15Q16.4 1.7 16.4 3.1V15Q16.4 16.4 15 16.4H3.2Q1.8 16.4 1.8 15Z" fill="#fbfbfc"/><rect x="2.6" y="6" width="8" height="9.6" fill="#dfe2e7"/><path d="M16.4 12.2V3.1Q16.4 1.7 15 1.7H4.9L1.8 4.8V15Q1.8 16.4 3.2 16.4H13" fill="none" stroke="#2d2f33" stroke-width="1.25"/><path d="M10.2 7.1H14.4V9.2L13.5 10.2L15.6 12.3V13.7H9V12.3L11.1 10.2L10.2 9.2Z" fill="#f7a21b" stroke="#b0260c" stroke-width=".9" stroke-linejoin="round"/><rect x="11" y="7.9" width="2.5" height="0.9" fill="#fff"/><rect x="10" y="12.5" width="3" height="0.8" fill="#fff"/><path d="M12.3 13.8V17.4" stroke="#2d2f33" stroke-width="1.1"/></svg>
<div class="rt" style="left:120px;top:791px">Component17:1</div>
<svg class="a" style="left:40px;top:816px" width="11" height="15" viewBox="0 0 11 15"><path d="M1.2 1.2L9.8 7.5L1.2 13.8Z" fill="#fff" stroke="#2a2a2a" stroke-width="1.1" stroke-linejoin="round"/></svg>
<div class="row" style="left:59px;top:812px;width:163px"></div>
<svg class="a" style="left:65px;top:815px" width="12" height="16" viewBox="0 0 12 16"><path d="M6 1.6Q10.9 1.6 10.9 6.1Q10.9 8.3 9.1 9.8Q8.3 10.5 8.2 11.2H3.8Q3.7 10.5 2.9 9.8Q1.1 8.3 1.1 6.1Q1.1 1.6 6 1.6Z" fill="#f6e04a" stroke="#b59a10" stroke-width=".8"/><rect x="3.7" y="11.2" width="4.6" height="4.2" rx="1.3" fill="#555b6c"/><rect x="5" y="12" width="2" height="2.4" fill="#dfe3ea"/><ellipse cx="4.6" cy="4.6" rx="1.3" ry="1.5" fill="#fff" opacity=".85"/></svg>
<svg class="a" style="left:88px;top:814px" width="18" height="18" viewBox="0 0 18 18"><path d="M1.8 4.8L4.9 1.7H15Q16.4 1.7 16.4 3.1V15Q16.4 16.4 15 16.4H3.2Q1.8 16.4 1.8 15Z" fill="#fbfbfc"/><rect x="2.6" y="6" width="8" height="9.6" fill="#dfe2e7"/><path d="M16.4 12.2V3.1Q16.4 1.7 15 1.7H4.9L1.8 4.8V15Q1.8 16.4 3.2 16.4H13" fill="none" stroke="#2d2f33" stroke-width="1.25"/><path d="M10.2 7.1H14.4V9.2L13.5 10.2L15.6 12.3V13.7H9V12.3L11.1 10.2L10.2 9.2Z" fill="#f7a21b" stroke="#b0260c" stroke-width=".9" stroke-linejoin="round"/><rect x="11" y="7.9" width="2.5" height="0.9" fill="#fff"/><rect x="10" y="12.5" width="3" height="0.8" fill="#fff"/><path d="M12.3 13.8V17.4" stroke="#2d2f33" stroke-width="1.1"/></svg>
<div class="rt" style="left:120px;top:817px">Component18:1</div>
<svg class="a" style="left:40px;top:842px" width="11" height="15" viewBox="0 0 11 15"><path d="M1.2 1.2L9.8 7.5L1.2 13.8Z" fill="#fff" stroke="#2a2a2a" stroke-width="1.1" stroke-linejoin="round"/></svg>
<div class="row" style="left:59px;top:838px;width:163px"></div>
<svg class="a" style="left:65px;top:841px" width="12" height="16" viewBox="0 0 12 16"><path d="M6 1.6Q10.9 1.6 10.9 6.1Q10.9 8.3 9.1 9.8Q8.3 10.5 8.2 11.2H3.8Q3.7 10.5 2.9 9.8Q1.1 8.3 1.1 6.1Q1.1 1.6 6 1.6Z" fill="#f6e04a" stroke="#b59a10" stroke-width=".8"/><rect x="3.7" y="11.2" width="4.6" height="4.2" rx="1.3" fill="#555b6c"/><rect x="5" y="12" width="2" height="2.4" fill="#dfe3ea"/><ellipse cx="4.6" cy="4.6" rx="1.3" ry="1.5" fill="#fff" opacity=".85"/></svg>
<svg class="a" style="left:88px;top:840px" width="18" height="18" viewBox="0 0 18 18"><path d="M1.8 4.8L4.9 1.7H15Q16.4 1.7 16.4 3.1V15Q16.4 16.4 15 16.4H3.2Q1.8 16.4 1.8 15Z" fill="#fbfbfc"/><rect x="2.6" y="6" width="8" height="9.6" fill="#dfe2e7"/><path d="M16.4 12.2V3.1Q16.4 1.7 15 1.7H4.9L1.8 4.8V15Q1.8 16.4 3.2 16.4H13" fill="none" stroke="#2d2f33" stroke-width="1.25"/><path d="M10.2 7.1H14.4V9.2L13.5 10.2L15.6 12.3V13.7H9V12.3L11.1 10.2L10.2 9.2Z" fill="#f7a21b" stroke="#b0260c" stroke-width=".9" stroke-linejoin="round"/><rect x="11" y="7.9" width="2.5" height="0.9" fill="#fff"/><rect x="10" y="12.5" width="3" height="0.8" fill="#fff"/><path d="M12.3 13.8V17.4" stroke="#2d2f33" stroke-width="1.1"/></svg>
<div class="rt" style="left:120px;top:843px">Component19:1</div>
<svg class="a" style="left:40px;top:868px" width="11" height="15" viewBox="0 0 11 15"><path d="M1.2 1.2L9.8 7.5L1.2 13.8Z" fill="#fff" stroke="#2a2a2a" stroke-width="1.1" stroke-linejoin="round"/></svg>
<div class="row" style="left:59px;top:864px;width:163px"></div>
<svg class="a" style="left:65px;top:867px" width="12" height="16" viewBox="0 0 12 16"><path d="M6 1.6Q10.9 1.6 10.9 6.1Q10.9 8.3 9.1 9.8Q8.3 10.5 8.2 11.2H3.8Q3.7 10.5 2.9 9.8Q1.1 8.3 1.1 6.1Q1.1 1.6 6 1.6Z" fill="#f6e04a" stroke="#b59a10" stroke-width=".8"/><rect x="3.7" y="11.2" width="4.6" height="4.2" rx="1.3" fill="#555b6c"/><rect x="5" y="12" width="2" height="2.4" fill="#dfe3ea"/><ellipse cx="4.6" cy="4.6" rx="1.3" ry="1.5" fill="#fff" opacity=".85"/></svg>
<svg class="a" style="left:88px;top:866px" width="18" height="18" viewBox="0 0 18 18"><path d="M1.8 4.8L4.9 1.7H15Q16.4 1.7 16.4 3.1V15Q16.4 16.4 15 16.4H3.2Q1.8 16.4 1.8 15Z" fill="#fbfbfc"/><rect x="2.6" y="6" width="8" height="9.6" fill="#dfe2e7"/><path d="M16.4 12.2V3.1Q16.4 1.7 15 1.7H4.9L1.8 4.8V15Q1.8 16.4 3.2 16.4H13" fill="none" stroke="#2d2f33" stroke-width="1.25"/><path d="M10.2 7.1H14.4V9.2L13.5 10.2L15.6 12.3V13.7H9V12.3L11.1 10.2L10.2 9.2Z" fill="#f7a21b" stroke="#b0260c" stroke-width=".9" stroke-linejoin="round"/><rect x="11" y="7.9" width="2.5" height="0.9" fill="#fff"/><rect x="10" y="12.5" width="3" height="0.8" fill="#fff"/><path d="M12.3 13.8V17.4" stroke="#2d2f33" stroke-width="1.1"/></svg>
<div class="rt" style="left:120px;top:869px">Component20:1</div>
<svg class="a" style="left:40px;top:894px" width="11" height="15" viewBox="0 0 11 15"><path d="M1.2 1.2L9.8 7.5L1.2 13.8Z" fill="#fff" stroke="#2a2a2a" stroke-width="1.1" stroke-linejoin="round"/></svg>
<div class="row" style="left:59px;top:890px;width:163px"></div>
<svg class="a" style="left:65px;top:893px" width="12" height="16" viewBox="0 0 12 16"><path d="M6 1.6Q10.9 1.6 10.9 6.1Q10.9 8.3 9.1 9.8Q8.3 10.5 8.2 11.2H3.8Q3.7 10.5 2.9 9.8Q1.1 8.3 1.1 6.1Q1.1 1.6 6 1.6Z" fill="#f6e04a" stroke="#b59a10" stroke-width=".8"/><rect x="3.7" y="11.2" width="4.6" height="4.2" rx="1.3" fill="#555b6c"/><rect x="5" y="12" width="2" height="2.4" fill="#dfe3ea"/><ellipse cx="4.6" cy="4.6" rx="1.3" ry="1.5" fill="#fff" opacity=".85"/></svg>
<svg class="a" style="left:88px;top:892px" width="18" height="18" viewBox="0 0 18 18"><path d="M1.8 4.8L4.9 1.7H15Q16.4 1.7 16.4 3.1V15Q16.4 16.4 15 16.4H3.2Q1.8 16.4 1.8 15Z" fill="#fbfbfc"/><rect x="2.6" y="6" width="8" height="9.6" fill="#dfe2e7"/><path d="M16.4 12.2V3.1Q16.4 1.7 15 1.7H4.9L1.8 4.8V15Q1.8 16.4 3.2 16.4H13" fill="none" stroke="#2d2f33" stroke-width="1.25"/><path d="M10.2 7.1H14.4V9.2L13.5 10.2L15.6 12.3V13.7H9V12.3L11.1 10.2L10.2 9.2Z" fill="#f7a21b" stroke="#b0260c" stroke-width=".9" stroke-linejoin="round"/><rect x="11" y="7.9" width="2.5" height="0.9" fill="#fff"/><rect x="10" y="12.5" width="3" height="0.8" fill="#fff"/><path d="M12.3 13.8V17.4" stroke="#2d2f33" stroke-width="1.1"/></svg>
<div class="rt" style="left:120px;top:895px">Component21:1</div>
<svg class="a" style="left:40px;top:920px" width="11" height="15" viewBox="0 0 11 15"><path d="M1.2 1.2L9.8 7.5L1.2 13.8Z" fill="#fff" stroke="#2a2a2a" stroke-width="1.1" stroke-linejoin="round"/></svg>
<div class="row" style="left:59px;top:916px;width:163px"></div>
<svg class="a" style="left:65px;top:919px" width="12" height="16" viewBox="0 0 12 16"><path d="M6 1.6Q10.9 1.6 10.9 6.1Q10.9 8.3 9.1 9.8Q8.3 10.5 8.2 11.2H3.8Q3.7 10.5 2.9 9.8Q1.1 8.3 1.1 6.1Q1.1 1.6 6 1.6Z" fill="#f6e04a" stroke="#b59a10" stroke-width=".8"/><rect x="3.7" y="11.2" width="4.6" height="4.2" rx="1.3" fill="#555b6c"/><rect x="5" y="12" width="2" height="2.4" fill="#dfe3ea"/><ellipse cx="4.6" cy="4.6" rx="1.3" ry="1.5" fill="#fff" opacity=".85"/></svg>
<svg class="a" style="left:88px;top:918px" width="18" height="18" viewBox="0 0 18 18"><path d="M1.8 4.8L4.9 1.7H15Q16.4 1.7 16.4 3.1V15Q16.4 16.4 15 16.4H3.2Q1.8 16.4 1.8 15Z" fill="#fbfbfc"/><rect x="2.6" y="6" width="8" height="9.6" fill="#dfe2e7"/><path d="M16.4 12.2V3.1Q16.4 1.7 15 1.7H4.9L1.8 4.8V15Q1.8 16.4 3.2 16.4H13" fill="none" stroke="#2d2f33" stroke-width="1.25"/><path d="M10.2 7.1H14.4V9.2L13.5 10.2L15.6 12.3V13.7H9V12.3L11.1 10.2L10.2 9.2Z" fill="#f7a21b" stroke="#b0260c" stroke-width=".9" stroke-linejoin="round"/><rect x="11" y="7.9" width="2.5" height="0.9" fill="#fff"/><rect x="10" y="12.5" width="3" height="0.8" fill="#fff"/><path d="M12.3 13.8V17.4" stroke="#2d2f33" stroke-width="1.1"/></svg>
<div class="rt" style="left:120px;top:921px">Component22:1</div>
<div class="a" style="left:4px;top:967px;width:300px;height:25px;background:#d3d3d3;border:1px solid #b5b5b5"></div>
<div class="t" style="left:31px;top:974px;font-size:11.7px;color:#5b5b5b">COMMENTS</div>
<svg class="a" style="left:282px;top:974px" width="10" height="10" viewBox="0 0 10 10"><circle cx="5" cy="5" r="4.5" fill="#222"/><rect x="2.3" y="4.2" width="5.4" height="1.6" fill="#fff"/><rect x="4.2" y="2.3" width="1.6" height="5.4" fill="#fff"/></svg>
<div class="a" style="left:299px;top:973px;width:1px;height:12px;background:#777"></div><div class="a" style="left:301px;top:973px;width:1px;height:12px;background:#aaa"></div><!-- ============ MODIFY MENU ============ -->
<div class="a" style="left:374px;top:152px;width:201px;height:530px;background:#fcfcfc;border:1px solid #a3a3a3;border-radius:0 0 3px 3px;box-shadow:1px 1px 2px rgba(0,0,0,.12)"></div>
<svg class="a" style="left:378px;top:158px" width="18" height="18" viewBox="0 0 18 18"><path d="M1 4Q1 1 4 1H6L3 4V16H1Z" fill="#eee" stroke="#444" stroke-width=".8"/><path d="M3.5 4L6.5 1H12V13L9 16H3.5Z" fill="#a9c6e6" stroke="#3b4a5a" stroke-width=".9"/><path d="M9 4L12 1V13L9 16Z" fill="#7396bf"/><path d="M11 7H14V5L16.5 8L14 11V9H11Z" fill="#222"/></svg>
<div class="mi" style="top:161.4px">Press Pull</div>
<div class="ms" style="top:161.4px">Q</div>
<div class="msep" style="top:180px"></div>
<svg class="a" style="left:378px;top:185px" width="18" height="18" viewBox="0 0 18 18"><path d="M1.5 5L5 2H10Q15 3 16 8V13L12.5 16H1.5Z" fill="#d5dbe5" stroke="#444" stroke-width=".9"/><path d="M5 2Q12 3 12.5 8V16M12.5 8L16 5" fill="none" stroke="#444" stroke-width=".8"/><path d="M5 2Q12 3 12.5 8L16 5Q15 2 10 1.5Z" fill="#7fa7d6"/></svg>
<div class="mi" style="top:188.4px">Fillet</div>
<div class="ms" style="top:188.4px">F</div>
<svg class="a" style="left:378px;top:211px" width="18" height="18" viewBox="0 0 18 18"><path d="M4 5L7 2H11Q16 3 16 8V13L13 16H4Z" fill="#d5dbe5" stroke="#444" stroke-width=".9"/><path d="M7 2Q13 3 13 8L16 5Q15 2 11 1.5Z" fill="#4f7fc0"/><rect x="1" y="8" width="7" height="8" fill="#fff" stroke="#333" stroke-width=".9"/><path d="M2.5 11H6.5M2.5 13.5H6.5" stroke="#333" stroke-width=".8"/></svg>
<div class="mi" style="top:214.4px">Rule Fillet</div>
<svg class="a" style="left:378px;top:237px" width="18" height="18" viewBox="0 0 18 18"><path d="M1.5 8L6 3H16V12L11 16H1.5Z" fill="#dfe3ea" stroke="#444" stroke-width=".9"/><path d="M1.5 8L6 3H10L5 8Z" fill="#b9c9dc"/><path d="M5 8V16" stroke="#555" stroke-width=".8"/></svg>
<div class="mi" style="top:240.4px">Chamfer</div>
<div class="msep" style="top:259.5px"></div>
<svg class="a" style="left:378px;top:264px" width="18" height="18" viewBox="0 0 18 18"><path d="M1.5 4L4.5 1.5H16.5V13L13.5 16H1.5Z" fill="#dfe3ea" stroke="#444" stroke-width=".9"/><rect x="4" y="6" width="7" height="7" fill="#fff" stroke="#333" stroke-width=".9"/><rect x="6" y="8" width="4" height="4" fill="#6e8fc0"/></svg>
<div class="mi" style="top:267.4px">Shell</div>
<svg class="a" style="left:378px;top:290px" width="18" height="18" viewBox="0 0 18 18"><path d="M1.5 5L4 2V15.5H1.5Z" fill="#eee" stroke="#444" stroke-width=".8"/><path d="M4 4L9 1L14 11L9 16H4Z" fill="#7fa7d6" stroke="#3b4a5a" stroke-width=".9"/><path d="M12 1L12 8L13.5 6.5L15 9" fill="#fff" stroke="#222" stroke-width=".8"/></svg>
<div class="mi" style="top:293.4px">Draft</div>
<svg class="a" style="left:378px;top:316px" width="18" height="18" viewBox="0 0 18 18"><rect x="1.5" y="1.5" width="15" height="15" fill="#8cb0dc" stroke="#2f3b4a" stroke-width="1"/><rect x="1.5" y="9.5" width="7" height="7" fill="#eef0f4" stroke="#2f3b4a" stroke-width="1"/></svg>
<div class="mi" style="top:319.4px">Scale</div>
<svg class="a" style="left:378px;top:342px" width="18" height="18" viewBox="0 0 18 18"><path d="M1.5 8L4 5H10V14L7.5 16.5H1.5Z" fill="#6f9ad0" stroke="#3b4a5a" stroke-width=".9"/><path d="M7 4L10 1H16.5V9L13.5 12H7Z" fill="#a9c6e6" stroke="#3b4a5a" stroke-width=".9"/></svg>
<div class="mi" style="top:345.4px">Combine</div>
<svg class="a" style="left:378px;top:368px" width="18" height="18" viewBox="0 0 18 18"><path d="M0 2Q8 -1 16 2" stroke="#3d7fe0" stroke-width="1.3" fill="none"/><rect x="2" y="3" width="12" height="13" fill="#e8eaee" stroke="#444" stroke-width=".9"/><path d="M8 14V6M5 9L8 5.5L11 9" fill="none" stroke="#222" stroke-width="1.2"/><path d="M3.5 14.5H12.5" stroke="#222" stroke-width="1"/></svg>
<div class="mi" style="top:371.4px">Replace Face</div>
<svg class="a" style="left:378px;top:394px" width="18" height="18" viewBox="0 0 18 18"><path d="M2 2L14 6V16L2 12Z" fill="#d5dbe5" stroke="#444" stroke-width=".9"/><path d="M2 7Q6 6 8 9Q10 12 14 11" fill="none" stroke="#e03a2a" stroke-width="1.2"/></svg>
<div class="mi" style="top:397.4px">Split Face</div>
<svg class="a" style="left:378px;top:420px" width="18" height="18" viewBox="0 0 18 18"><path d="M1.5 5L5 1.5H16.5V13L13 16.5H1.5Z" fill="#c4d3e6" stroke="#3b4a5a" stroke-width=".9"/><path d="M1.5 5H13V16.5M13 5L16.5 1.5" fill="none" stroke="#3b4a5a" stroke-width=".8"/><path d="M1.5 11Q5 8 8 11Q10 13 13 10L16.5 7" fill="none" stroke="#e03a2a" stroke-width="1.2"/></svg>
<div class="mi" style="top:423.4px">Split Body</div>
<svg class="a" style="left:378px;top:446px" width="18" height="18" viewBox="0 0 18 18"><ellipse cx="9" cy="9" rx="8" ry="5.5" fill="#b9c4d6" stroke="#444" stroke-width=".9"/><path d="M1.5 9Q5 6 9 9Q13 12 16.5 9" fill="none" stroke="#e03a2a" stroke-width="1.2"/></svg>
<div class="mi" style="top:449.4px">Silhouette Split</div>
<div class="msep" style="top:468.5px"></div>
<svg class="a" style="left:378px;top:473px" width="18" height="18" viewBox="0 0 18 18"><path d="M9 1V17M1 9H17" stroke="#333" stroke-width="1.2"/><path d="M9 0L6.5 3.5H11.5ZM9 18L6.5 14.5H11.5ZM0 9L3.5 6.5V11.5ZM18 9L14.5 6.5V11.5Z" fill="#333"/><circle cx="9" cy="9" r="2.5" fill="#fff" stroke="#333"/></svg>
<div class="mi" style="top:476.4px">Move/Copy</div>
<div class="ms" style="top:476.4px">M</div>
<svg class="a" style="left:378px;top:499px" width="18" height="18" viewBox="0 0 18 18"><rect x="1" y="1" width="6.5" height="15" fill="#fff" stroke="#333" stroke-width=".9"/><rect x="10" y="1" width="6.5" height="15" fill="#fff" stroke="#333" stroke-width=".9"/><rect x="1" y="1" width="6.5" height="4" fill="#e0502a"/><rect x="10" y="1" width="6.5" height="4" fill="#e0502a"/><path d="M2.5 9H6M11.5 9H15M11.5 12H15" stroke="#555"/></svg>
<div class="mi" style="top:502.4px">Align</div>
<div class="msep" style="top:521.5px"></div>
<svg class="a" style="left:378px;top:526px" width="18" height="18" viewBox="0 0 18 18"><circle cx="9" cy="9" r="7.5" fill="#d8d8d8" stroke="#555" stroke-width=".9"/><circle cx="9" cy="9" r="5" fill="none" stroke="#888" stroke-width=".8" stroke-dasharray="1.5 1"/><circle cx="9" cy="9" r="2" fill="#999"/></svg>
<div class="mi" style="top:529.4px">Physical Material</div>
<div class="a" style="left:379px;top:548px;width:191px;height:26px;background:#c6c6c6"></div>
<svg class="a" style="left:548px;top:553px" width="16" height="15" viewBox="0 0 16 15"><path d="M2 10Q5 14 9 13Q13 11.5 12.5 5" fill="none" stroke="#333" stroke-width="1.8"/><path d="M9.5 6L12.5 1.5L15.5 6Z" fill="#333"/></svg>
<svg class="a" style="left:378px;top:552px" width="18" height="18" viewBox="0 0 18 18"><defs><radialGradient id="aph" cx=".35" cy=".3" r=".75"><stop offset="0" stop-color="#fff" stop-opacity=".55"/><stop offset="1" stop-color="#fff" stop-opacity="0"/></radialGradient></defs><circle cx="9" cy="9" r="7.8" fill="#f2cf2a"/><path d="M8.3 1.2A7.8 7.8 0 0 0 7 16.6Q5.8 11.8 9.6 9.2Q6.6 5.6 8.3 1.2Z" fill="#6f9ee0"/><path d="M8.3 1.2A7.8 7.8 0 0 1 16.6 7.4Q12.6 7.4 9.6 9.2Q6.6 5.6 8.3 1.2Z" fill="#e38888"/><circle cx="9" cy="9" r="7.8" fill="url(#aph)" stroke="#7a7a7a" stroke-width=".7"/></svg>
<div class="mi" style="top:555.4px">Appearance</div>
<div class="ms" style="top:555.4px">A</div>
<svg class="a" style="left:378px;top:578px" width="18" height="18" viewBox="0 0 18 18"><rect x="1.5" y="2" width="14" height="14" fill="#fff" stroke="#444" stroke-width=".9"/><path d="M3.5 5H13.5" stroke="#666"/><circle cx="5.5" cy="9.5" r="1.6" fill="none" stroke="#555"/><circle cx="11" cy="9.5" r="1.6" fill="none" stroke="#555"/><circle cx="5.5" cy="13" r="1.6" fill="none" stroke="#555"/><circle cx="11" cy="13" r="1.6" fill="none" stroke="#555"/></svg>
<div class="mi" style="top:581.4px">Manage Materials</div>
<div class="msep" style="top:600.5px"></div>
<svg class="a" style="left:378px;top:605px" width="18" height="18" viewBox="0 0 18 18"><path d="M1.5 3Q1.5 1 7 1Q12.5 1 12.5 3V14Q12.5 16 7 16Q1.5 16 1.5 14Z" fill="#e9e9ea" stroke="#444" stroke-width=".9"/><ellipse cx="7" cy="3" rx="5.5" ry="1.8" fill="#f8f8f8" stroke="#444" stroke-width=".8"/><path d="M10 11L16 17M16 11L10 17" stroke="#d42a14" stroke-width="2"/></svg>
<div class="mi" style="top:608.4px">Delete</div>
<div class="ms" style="top:608.4px">Del</div>
<svg class="a" style="left:378px;top:631px" width="18" height="18" viewBox="0 0 18 18"><path d="M1 1.5H10L13 4.5V12H1Z" fill="#d0d4dc" stroke="#444" stroke-width=".9"/><path d="M13 8L9 13H12L9.5 17L15 11H12L14 8Z" fill="#f2a20c" stroke="#d47a00" stroke-width=".6"/></svg>
<div class="mi" style="top:634.4px">Compute All</div>
<div class="ms" style="top:634.4px">Ctrl+B</div>
<svg class="a" style="left:378px;top:657px" width="18" height="18" viewBox="0 0 18 18"><path d="M2 1.5H15.5V4.5L14 3H5.5L10 9L5 15H14.5L16 13V16.5H1.5V15.5L7 9L1.5 2Z" fill="#111"/></svg>
<div class="mi" style="top:660.4px">Change Parameters</div><!-- ============ NAV BAR ============ -->
<div class="a" style="left:828px;top:965px;width:146px;height:27px;background:#c9c9c9"></div>
<div class="a" style="left:980px;top:965px;width:112px;height:27px;background:#c9c9c9"></div>
<svg class="a" style="left:828px;top:965px" width="264" height="27" viewBox="828 965 264 27">
  <g fill="#333">
    <path d="M854 976H861L857.5 980Z"/><path d="M964 976H971L967.5 980Z"/><path d="M1004 976H1011L1007.5 980Z"/><path d="M1041 976H1048L1044.5 980Z"/><path d="M1078 976H1085L1081.5 980Z"/>
  </g>
  <!-- orbit -->
  <ellipse cx="841" cy="977.5" rx="3.5" ry="8" fill="none" stroke="#333" stroke-width="1.1"/>
  <path d="M836 975Q833 977 836 980M846 974Q849 977 846 981" fill="none" stroke="#333" stroke-width="1"/>
  <path d="M839 977.5H843M841 975.5V979.5" stroke="#2f7fe0" stroke-width="1.5"/>
  <!-- look at -->
  <rect x="868" y="973" width="14" height="11" fill="#f4f4f4" stroke="#333" stroke-width="1.2"/>
  <rect x="871" y="976" width="8" height="4" fill="#9aa3b3" stroke="#333" stroke-width=".8"/>
  <path d="M869 973L872 969L876 971L880 969L882 973" fill="none" stroke="#333" stroke-width="1"/>
  <!-- pan -->
  <path d="M893 978V972Q893 970.5 894.5 970.5Q896 970.5 896 972V976V970Q896 968.5 897.5 968.5Q899 968.5 899 970V976V970.5Q899 969 900.5 969Q902 969 902 970.5V977V972.5Q902 971 903.5 971Q905 971 905 972.5V980Q905 985 900 985Q896 985 894 982L891 977Q890.5 975.5 892 975.8Z" fill="#fff" stroke="#333" stroke-width="1"/>
  <!-- zoom -->
  <circle cx="922" cy="977" r="5" fill="#dbe8f0" stroke="#333" stroke-width="1.3"/><path d="M925.5 980.5L929 984" stroke="#333" stroke-width="2.2"/>
  <path d="M928.5 971.5H933M930.8 969V974M928.5 975.5H933" stroke="#333" stroke-width="1"/>
  <!-- fit -->
  <rect x="942" y="970" width="15" height="15" fill="none" stroke="#555" stroke-width=".8" stroke-dasharray="1.5 1.2"/>
  <circle cx="948" cy="976" r="5.5" fill="#dbe8f0" stroke="#333" stroke-width="1.3"/><path d="M952 980L956 984" stroke="#333" stroke-width="2.2"/>
  <!-- display -->
  <rect x="986" y="970.5" width="15" height="12" rx="1.5" fill="#a9c1e4" stroke="#3a3a3a" stroke-width="1.5"/>
  <path d="M991 984.5H996L997 986H990Z" fill="#fff" stroke="#333" stroke-width=".8"/>
  <!-- grid -->
  <rect x="1022.5" y="970.5" width="14" height="14" fill="#e8e8e8" stroke="#4a4a4a" stroke-width="1.1"/>
  <path d="M1025 970.5V984.5M1027.5 970.5V984.5M1030 970.5V984.5M1032.5 970.5V984.5M1035 970.5V984.5M1022.5 973H1036.5M1022.5 975.5H1036.5M1022.5 978H1036.5M1022.5 980.5H1036.5M1022.5 983H1036.5" stroke="#6a6a6a" stroke-width=".9"/>
  <!-- viewports -->
  <rect x="1059" y="971" width="15" height="13" fill="#2e5aa0"/>
  <rect x="1060.5" y="972.5" width="5.5" height="4.5" fill="#9bb8e0"/><rect x="1067" y="972.5" width="5.5" height="4.5" fill="#9bb8e0"/>
  <rect x="1060.5" y="978" width="5.5" height="4.5" fill="#9bb8e0"/><rect x="1067" y="978" width="5.5" height="4.5" fill="#9bb8e0"/>
</svg>

<!-- ============ VIEWCUBE ============ -->
<svg class="a" style="left:1800px;top:85px" width="120" height="115" viewBox="1800 85 120 115">
  <defs>
    <filter id="cshadow" x="-50%" y="-50%" width="200%" height="200%"><feGaussianBlur stdDeviation="5"/></filter>
    <linearGradient id="gcf" x1="0" y1="0" x2="0" y2="1"><stop offset="0" stop-color="#eeeeee"/><stop offset="1" stop-color="#d8d8d8"/></linearGradient>
    <linearGradient id="gcr" x1="0" y1="0" x2="0" y2="1"><stop offset="0" stop-color="#ececec"/><stop offset="1" stop-color="#d9d9d9"/></linearGradient>
  </defs>
  <ellipse cx="1858" cy="178" rx="30" ry="13" fill="#000" opacity=".2" filter="url(#cshadow)"/>
  <path d="M1856.6 109.9L1891.9 125.2L1856.6 145.1L1821.4 125.2Z" fill="#ebebeb" stroke="#7a7a7a" stroke-width=".9"/>
  <path d="M1821.4 125.2L1856.6 145.1V186.2L1825.4 164.2Z" fill="url(#gcf)" stroke="#7a7a7a" stroke-width=".9"/>
  <path d="M1891.9 125.2L1856.6 145.1V186.2L1887.9 164.2Z" fill="url(#gcr)" stroke="#7a7a7a" stroke-width=".9"/>
  <text x="0" y="0" font-family="Liberation Sans" font-size="9.5" fill="#8a8a8a" transform="matrix(.95 .5 -.3 .9 1848 119)">TOP</text>
  <text x="0" y="0" font-family="Liberation Sans" font-size="8.6" fill="#8a8a8a" transform="matrix(.9 .5 0 1 1827.5 150)">FRONT</text>
  <text x="0" y="0" font-family="Liberation Sans" font-size="8.6" fill="#8a8a8a" transform="matrix(.9 -.5 0 1 1862 167)">RIGHT</text>
  <path d="M1856.6 102V110" stroke="#4ccf4c" stroke-width="1.6"/>
  <text x="1856.6" y="100.5" font-family="Liberation Sans" font-size="13" fill="#55dd55" text-anchor="middle">Y</text>
  <path d="M1820 167.5L1825.4 164.2" stroke="#5a5af0" stroke-width="1.6"/>
  <text x="1813" y="175" font-family="Liberation Sans" font-size="12.5" fill="#6a6af5" text-anchor="middle">Z</text>
  <path d="M1887.9 164.2L1894 167.5" stroke="#f08a8a" stroke-width="1.6"/>
  <text x="1899" y="175" font-family="Liberation Sans" font-size="12.5" fill="#f27878" text-anchor="middle">X</text>
</svg>

<!-- ============ ANNOTATIONS ============ -->
<svg class="a" style="left:0;top:0" width="700" height="700" viewBox="0 0 700 700">
  <defs>
    <filter id="ds" x="-30%" y="-30%" width="160%" height="160%"><feGaussianBlur in="SourceAlpha" stdDeviation="2.2"/><feOffset dx="1.5" dy="2.5"/><feComponentTransfer><feFuncA type="linear" slope=".45"/></feComponentTransfer><feMerge><feMergeNode/><feMergeNode in="SourceGraphic"/></feMerge></filter>
  </defs>
  <g filter="url(#ds)">
    <rect x="366.5" y="86.5" width="83" height="64" fill="none" stroke="#fc3d3f" stroke-width="3"/>
    <rect x="366.5" y="542.5" width="217" height="38" fill="none" stroke="#fc3d3f" stroke-width="3"/>
    <circle cx="268.4" cy="249.4" r="40" fill="#fe4445"/>
    <circle cx="231.4" cy="562.2" r="40" fill="#fe4445"/>
    <path d="M298.1 209.6L303.7 215.9L327.1 197.5L321.3 190.4Z" fill="#fe4445"/>
    <path d="M356.5 167.3L324.8 174.1L343.4 196.7Z" fill="#fe4445"/>
    <path d="M277 555.3L307.1 554.8L307.1 565.3L277 565.8Z" fill="#fe4445"/>
    <path d="M337 559.8L308.2 545.4L308.2 575.2Z" fill="#fe4445"/>
  </g>
  <path d="M268.6 228.4H275V270.6H268.4V238.6Q263.6 243.4 257.7 245.6V239.4Q261.2 237.9 264.2 235Q267.4 231.8 268.6 228.4Z" fill="#fff"/>
  <text x="231.4" y="583.5" font-family="Liberation Sans" font-size="60" fill="#fff" text-anchor="middle">2</text>
</svg>

</body></html>
